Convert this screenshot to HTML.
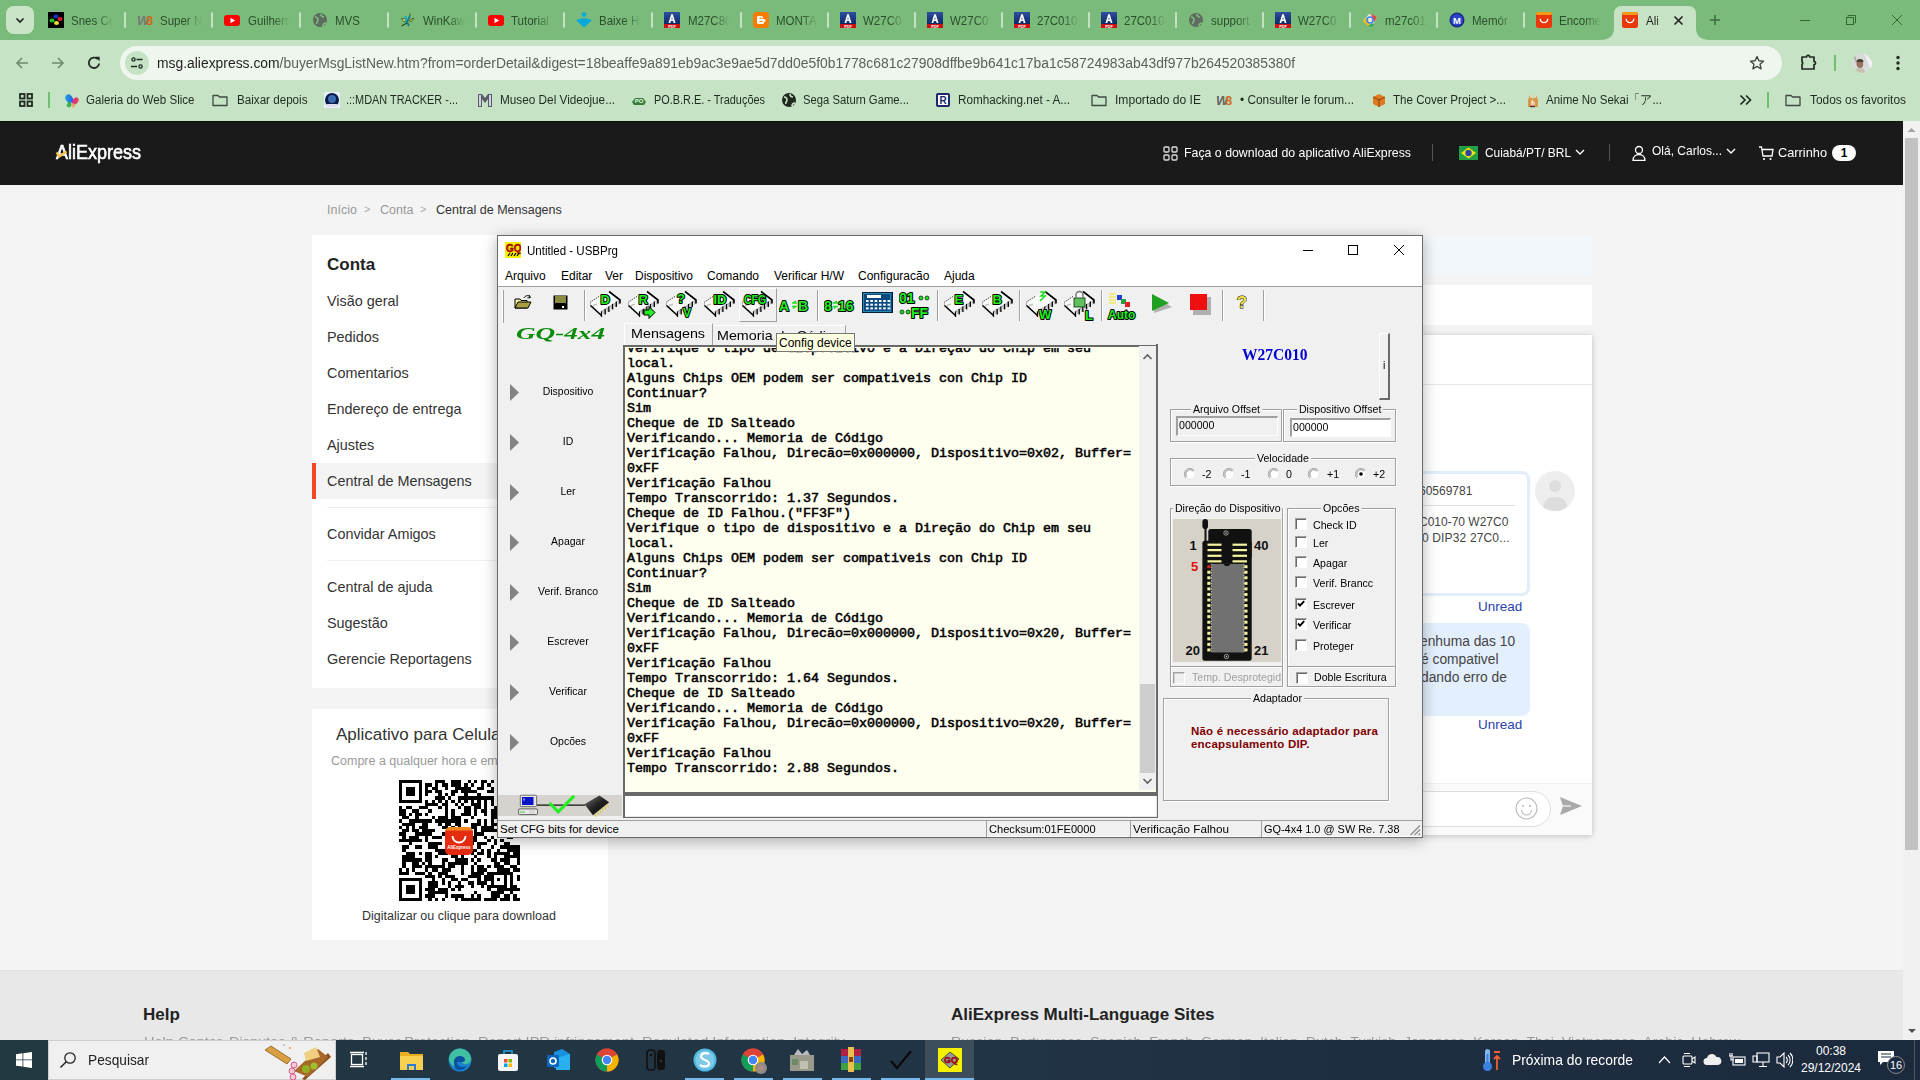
<!DOCTYPE html>
<html><head><meta charset="utf-8"><style>
*{margin:0;padding:0;box-sizing:border-box}
html,body{width:1920px;height:1080px;overflow:hidden;background:#f4f4f4;font-family:"Liberation Sans",sans-serif;position:relative}
.a{position:absolute}
.t{position:absolute;white-space:nowrap;line-height:1;transform-origin:0 0}
.tabt{font-size:12.5px;color:#2a4f2a;width:46px;overflow:hidden;-webkit-mask-image:linear-gradient(90deg,#000 60%,transparent 100%)}
.bmt{font-size:12.5px;color:#1f2a1f}
.hdt{font-size:13px;color:#fff}
.bc{font-size:12.5px}
.sbt{font-size:14.4px;color:#333}
.msg{font-size:12px;color:#444}
.menu{font-size:12px;color:#000}
.wt{font-size:11px;color:#000;transform:scaleX(0.965)}
.lb{font-size:11.5px;color:#000}
.tabw{font-size:13px;color:#000}
.log{font-family:"Liberation Mono",monospace;font-weight:normal;-webkit-text-stroke:0.55px #000;font-size:13.33px;color:#000;line-height:15px}
</style></head><body>
<div class="a" style="left:0;top:0;width:1920px;height:40px;background:#7abb7b"></div>
<div class="a" style="left:6px;top:6px;width:28px;height:28px;border-radius:8px;background:#c9e4c8"></div>
<svg class="a" style="left:14px;top:14px;width:12px;height:12px" viewBox="0 0 12 12"><path d="M2.5 4.5L6 8l3.5-3.5" stroke="#1f1f1f" stroke-width="1.6" fill="none"/></svg>
<svg class="a" style="left:47.5px;top:12px;width:16px;height:16px" viewBox="0 0 16 16"><rect width="16" height="16" fill="#000"/><ellipse cx="8" cy="4.5" rx="2.5" ry="2" fill="#2030c0"/><ellipse cx="12" cy="7" rx="2.5" ry="2" fill="#e02020"/><ellipse cx="4" cy="8.5" rx="2.5" ry="2" fill="#20c020"/><ellipse cx="8.5" cy="11" rx="2.5" ry="2" fill="#f0e020"/></svg>
<div class="t tabt" style="left:71px;top:14.5px;transform:scaleX(0.92)">Snes Ce</div>
<div class="a" style="left:124px;top:12px;width:2px;height:16px;background:#c2e2c0;border-radius:1px"></div>
<svg class="a" style="left:136.5px;top:12px;width:16px;height:16px" viewBox="0 0 16 16"><text x="0" y="13" font-family="Liberation Sans" font-weight="bold" font-style="italic" font-size="13" fill="#777">W</text><text x="9" y="13" font-family="Liberation Sans" font-weight="bold" font-size="13" fill="#c86a20">8</text></svg>
<div class="t tabt" style="left:160px;top:14.5px;transform:scaleX(0.92)">Super N</div>
<div class="a" style="left:211px;top:12px;width:2px;height:16px;background:#c2e2c0;border-radius:1px"></div>
<svg class="a" style="left:224.0px;top:12px;width:16px;height:16px" viewBox="0 0 16 16"><rect x="0" y="3" width="16" height="11" rx="3" fill="#f00"/><path d="M6.5 5.8v5.4l4.6-2.7z" fill="#fff"/></svg>
<div class="t tabt" style="left:248px;top:14.5px;transform:scaleX(0.92)">Guilherm</div>
<div class="a" style="left:299px;top:12px;width:2px;height:16px;background:#c2e2c0;border-radius:1px"></div>
<svg class="a" style="left:311.5px;top:12px;width:16px;height:16px" viewBox="0 0 16 16"><circle cx="8" cy="8" r="7" fill="#5f6b5f"/><path d="M3 5c2 0 3 1 3 3s-2 2-1 4M9 2c0 2 1 3 3 3M11 14c0-2 1-3 3-3" stroke="#7dbb7d" stroke-width="1.6" fill="none"/></svg>
<div class="t tabt" style="left:335px;top:14.5px;transform:scaleX(0.92)">MVS</div>
<div class="a" style="left:387px;top:12px;width:2px;height:16px;background:#c2e2c0;border-radius:1px"></div>
<svg class="a" style="left:399.5px;top:12px;width:16px;height:16px" viewBox="0 0 16 16"><path d="M1.5 6.5L7 7.5L4 10z" fill="#e8f080" stroke="#4a5a10" stroke-width="0.9"/><path d="M9 8.5L14 6L11 10z" fill="#e8f040" stroke="#4a5a10" stroke-width="0.9"/><path d="M5 4C6 6 7 10 6 12" stroke="#20a8c0" stroke-width="2.2" fill="none"/><path d="M10 4L7 10L9 14" stroke="#108090" stroke-width="1.8" fill="none"/><path d="M1.5 14L7 11" stroke="#3a4a10" stroke-width="1.4"/><path d="M10 1.5V4" stroke="#5a6a20" stroke-width="1.2"/></svg>
<div class="t tabt" style="left:423px;top:14.5px;transform:scaleX(0.92)">WinKaw</div>
<div class="a" style="left:475px;top:12px;width:2px;height:16px;background:#c2e2c0;border-radius:1px"></div>
<svg class="a" style="left:487.5px;top:12px;width:16px;height:16px" viewBox="0 0 16 16"><rect x="0" y="3" width="16" height="11" rx="3" fill="#f00"/><path d="M6.5 5.8v5.4l4.6-2.7z" fill="#fff"/></svg>
<div class="t tabt" style="left:511px;top:14.5px;transform:scaleX(0.92)">Tutorial</div>
<div class="a" style="left:563px;top:12px;width:2px;height:16px;background:#c2e2c0;border-radius:1px"></div>
<svg class="a" style="left:575.5px;top:12px;width:16px;height:16px" viewBox="0 0 16 16"><circle cx="8" cy="2.6" r="2.3" fill="#08a8d8"/><path d="M0.3 8.5Q2 6.3 4 7.3Q6 5.6 8 7Q10 5.6 12 7.3Q14 6.3 15.7 8.5L8 15.6z" fill="#08a8d8"/></svg>
<div class="t tabt" style="left:599px;top:14.5px;transform:scaleX(0.92)">Baixe H</div>
<div class="a" style="left:651px;top:12px;width:2px;height:16px;background:#c2e2c0;border-radius:1px"></div>
<svg class="a" style="left:664.0px;top:12px;width:16px;height:16px" viewBox="0 0 16 16"><defs><linearGradient id="pg" x1="0" y1="0" x2="0" y2="1"><stop offset="0" stop-color="#2f4f9f"/><stop offset="1" stop-color="#0e2a6a"/></linearGradient></defs><rect width="16" height="12" fill="url(#pg)"/><path d="M4.5 11L7.2 2.2h1.6L11.5 11h-1.8l-.6-2H6.9l-.6 2zM7.3 7.6h1.4L8 5z" fill="#fff"/><rect y="12" width="16" height="4" fill="#d01010"/><text x="8" y="15.6" text-anchor="middle" font-family="Liberation Sans" font-weight="bold" font-size="3.8" fill="#fff">PDF</text></svg>
<div class="t tabt" style="left:688px;top:14.5px;transform:scaleX(0.92)">M27C80</div>
<div class="a" style="left:740px;top:12px;width:2px;height:16px;background:#c2e2c0;border-radius:1px"></div>
<svg class="a" style="left:752.5px;top:12px;width:16px;height:16px" viewBox="0 0 16 16"><rect width="16" height="16" rx="3.5" fill="#f57d00"/><path d="M5 4h3.5a1.5 1.5 0 010 3H11a1.5 1.5 0 010 3v.5A1.5 1.5 0 019.5 12h-4A1.5 1.5 0 014 10.5v-5A1.5 1.5 0 015 4z" fill="#fff"/><path d="M6.5 6.2h2M6.5 9.5h3" stroke="#f57d00" stroke-width="1.2"/></svg>
<div class="t tabt" style="left:776px;top:14.5px;transform:scaleX(0.92)">MONTA</div>
<div class="a" style="left:827px;top:12px;width:2px;height:16px;background:#c2e2c0;border-radius:1px"></div>
<svg class="a" style="left:839.5px;top:12px;width:16px;height:16px" viewBox="0 0 16 16"><defs><linearGradient id="pg" x1="0" y1="0" x2="0" y2="1"><stop offset="0" stop-color="#2f4f9f"/><stop offset="1" stop-color="#0e2a6a"/></linearGradient></defs><rect width="16" height="12" fill="url(#pg)"/><path d="M4.5 11L7.2 2.2h1.6L11.5 11h-1.8l-.6-2H6.9l-.6 2zM7.3 7.6h1.4L8 5z" fill="#fff"/><rect y="12" width="16" height="4" fill="#d01010"/><text x="8" y="15.6" text-anchor="middle" font-family="Liberation Sans" font-weight="bold" font-size="3.8" fill="#fff">PDF</text></svg>
<div class="t tabt" style="left:863px;top:14.5px;transform:scaleX(0.92)">W27C0</div>
<div class="a" style="left:914px;top:12px;width:2px;height:16px;background:#c2e2c0;border-radius:1px"></div>
<svg class="a" style="left:926.5px;top:12px;width:16px;height:16px" viewBox="0 0 16 16"><defs><linearGradient id="pg" x1="0" y1="0" x2="0" y2="1"><stop offset="0" stop-color="#2f4f9f"/><stop offset="1" stop-color="#0e2a6a"/></linearGradient></defs><rect width="16" height="12" fill="url(#pg)"/><path d="M4.5 11L7.2 2.2h1.6L11.5 11h-1.8l-.6-2H6.9l-.6 2zM7.3 7.6h1.4L8 5z" fill="#fff"/><rect y="12" width="16" height="4" fill="#d01010"/><text x="8" y="15.6" text-anchor="middle" font-family="Liberation Sans" font-weight="bold" font-size="3.8" fill="#fff">PDF</text></svg>
<div class="t tabt" style="left:950px;top:14.5px;transform:scaleX(0.92)">W27C0</div>
<div class="a" style="left:1001px;top:12px;width:2px;height:16px;background:#c2e2c0;border-radius:1px"></div>
<svg class="a" style="left:1013.5px;top:12px;width:16px;height:16px" viewBox="0 0 16 16"><defs><linearGradient id="pg" x1="0" y1="0" x2="0" y2="1"><stop offset="0" stop-color="#2f4f9f"/><stop offset="1" stop-color="#0e2a6a"/></linearGradient></defs><rect width="16" height="12" fill="url(#pg)"/><path d="M4.5 11L7.2 2.2h1.6L11.5 11h-1.8l-.6-2H6.9l-.6 2zM7.3 7.6h1.4L8 5z" fill="#fff"/><rect y="12" width="16" height="4" fill="#d01010"/><text x="8" y="15.6" text-anchor="middle" font-family="Liberation Sans" font-weight="bold" font-size="3.8" fill="#fff">PDF</text></svg>
<div class="t tabt" style="left:1037px;top:14.5px;transform:scaleX(0.92)">27C010</div>
<div class="a" style="left:1088px;top:12px;width:2px;height:16px;background:#c2e2c0;border-radius:1px"></div>
<svg class="a" style="left:1100.5px;top:12px;width:16px;height:16px" viewBox="0 0 16 16"><defs><linearGradient id="pg" x1="0" y1="0" x2="0" y2="1"><stop offset="0" stop-color="#2f4f9f"/><stop offset="1" stop-color="#0e2a6a"/></linearGradient></defs><rect width="16" height="12" fill="url(#pg)"/><path d="M4.5 11L7.2 2.2h1.6L11.5 11h-1.8l-.6-2H6.9l-.6 2zM7.3 7.6h1.4L8 5z" fill="#fff"/><rect y="12" width="16" height="4" fill="#d01010"/><text x="8" y="15.6" text-anchor="middle" font-family="Liberation Sans" font-weight="bold" font-size="3.8" fill="#fff">PDF</text></svg>
<div class="t tabt" style="left:1124px;top:14.5px;transform:scaleX(0.92)">27C010</div>
<div class="a" style="left:1175px;top:12px;width:2px;height:16px;background:#c2e2c0;border-radius:1px"></div>
<svg class="a" style="left:1187.5px;top:12px;width:16px;height:16px" viewBox="0 0 16 16"><circle cx="8" cy="8" r="7" fill="#5f6b5f"/><path d="M3 5c2 0 3 1 3 3s-2 2-1 4M9 2c0 2 1 3 3 3M11 14c0-2 1-3 3-3" stroke="#7dbb7d" stroke-width="1.6" fill="none"/></svg>
<div class="t tabt" style="left:1211px;top:14.5px;transform:scaleX(0.92)">support</div>
<div class="a" style="left:1262px;top:12px;width:2px;height:16px;background:#c2e2c0;border-radius:1px"></div>
<svg class="a" style="left:1274.5px;top:12px;width:16px;height:16px" viewBox="0 0 16 16"><defs><linearGradient id="pg" x1="0" y1="0" x2="0" y2="1"><stop offset="0" stop-color="#2f4f9f"/><stop offset="1" stop-color="#0e2a6a"/></linearGradient></defs><rect width="16" height="12" fill="url(#pg)"/><path d="M4.5 11L7.2 2.2h1.6L11.5 11h-1.8l-.6-2H6.9l-.6 2zM7.3 7.6h1.4L8 5z" fill="#fff"/><rect y="12" width="16" height="4" fill="#d01010"/><text x="8" y="15.6" text-anchor="middle" font-family="Liberation Sans" font-weight="bold" font-size="3.8" fill="#fff">PDF</text></svg>
<div class="t tabt" style="left:1298px;top:14.5px;transform:scaleX(0.92)">W27C0</div>
<div class="a" style="left:1349px;top:12px;width:2px;height:16px;background:#c2e2c0;border-radius:1px"></div>
<svg class="a" style="left:1361.5px;top:12px;width:16px;height:16px" viewBox="0 0 16 16"><path d="M1 9l6-7 8 3-6 10z" fill="#e8e8e8"/><path d="M9 2l6 3-3 5z" fill="#ea4335"/><path d="M1 9l4-4 3 7-2 2z" fill="#fbbc05"/><path d="M6 14l4-3 2 2-3 2z" fill="#34a853"/><circle cx="8" cy="8" r="3" fill="none" stroke="#4285f4" stroke-width="1.6"/></svg>
<div class="t tabt" style="left:1385px;top:14.5px;transform:scaleX(0.92)">m27c01</div>
<div class="a" style="left:1436px;top:12px;width:2px;height:16px;background:#c2e2c0;border-radius:1px"></div>
<svg class="a" style="left:1448.5px;top:12px;width:16px;height:16px" viewBox="0 0 16 16"><circle cx="8" cy="8" r="7.5" fill="#1a2a8a"/><circle cx="8" cy="8" r="6" fill="#2a45c8"/><text x="8" y="11.6" text-anchor="middle" font-family="Liberation Sans" font-weight="bold" font-size="9.5" fill="#fff">M</text></svg>
<div class="t tabt" style="left:1472px;top:14.5px;transform:scaleX(0.92)">Memór</div>
<div class="a" style="left:1523px;top:12px;width:2px;height:16px;background:#c2e2c0;border-radius:1px"></div>
<svg class="a" style="left:1535.5px;top:12px;width:16px;height:16px" viewBox="0 0 16 16"><rect width="16" height="16" rx="2.5" fill="#e8380c"/><rect width="16" height="3" rx="1.5" fill="#f79a1a"/><path d="M4.2 6.8a3.8 3.8 0 007.6 0" stroke="#fff" stroke-width="1.4" fill="none"/></svg>
<div class="t tabt" style="left:1559px;top:14.5px;transform:scaleX(0.92)">Encome</div>
<svg class="a" style="left:1600px;top:6px;width:110px;height:36px" viewBox="0 0 110 36"><path d="M0 34 Q14 34 14 22 V8 Q14 0 22 0 H88 Q96 0 96 8 V22 Q96 34 110 34 V36 H0z" fill="#c6e3c6"/></svg>
<svg class="a" style="left:1622px;top:12px;width:16px;height:16px" viewBox="0 0 16 16"><rect width="16" height="16" rx="2.5" fill="#e8380c"/><rect width="16" height="3" rx="1.5" fill="#f79a1a"/><path d="M4.2 6.8a3.8 3.8 0 007.6 0" stroke="#fff" stroke-width="1.4" fill="none"/></svg>
<div class="t tabt" style="left:1646px;top:14.5px;color:#1f1f1f;width:19px;transform:scaleX(0.92)">Ali</div>
<svg class="a" style="left:1673px;top:15px;width:11px;height:11px" viewBox="0 0 11 11"><path d="M1.5 1.5l8 8M9.5 1.5l-8 8" stroke="#1f1f1f" stroke-width="1.6"/></svg>
<svg class="a" style="left:1709px;top:14px;width:12px;height:12px" viewBox="0 0 12 12"><path d="M6 1v10M1 6h10" stroke="#3d6b3d" stroke-width="1.5"/></svg>
<div class="a" style="left:1800px;top:20px;width:10px;height:1px;background:#2f6a2f"></div>
<svg class="a" style="left:1845px;top:14px;width:12px;height:12px" viewBox="0 0 12 12"><path d="M3 2.5V1.5h7.5V9H9.5" stroke="#2f6a2f" fill="none"/><rect x="1.5" y="3.5" width="7" height="7" stroke="#2f6a2f" fill="none"/></svg>
<svg class="a" style="left:1891px;top:14px;width:12px;height:12px" viewBox="0 0 12 12"><path d="M1 1l10 10M11 1L1 11" stroke="#2f6a2f" stroke-width="1"/></svg>
<div class="a" style="left:0;top:40px;width:1920px;height:81px;background:#c6e3c6"></div>
<svg class="a" style="left:14px;top:55px;width:16px;height:16px" viewBox="0 0 16 16"><path d="M14 8H3M8 3L3 8l5 5" stroke="#6f8a6f" stroke-width="1.6" fill="none"/></svg>
<svg class="a" style="left:50px;top:55px;width:16px;height:16px" viewBox="0 0 16 16"><path d="M2 8h11M8 3l5 5-5 5" stroke="#6f8a6f" stroke-width="1.6" fill="none"/></svg>
<svg class="a" style="left:86px;top:55px;width:16px;height:16px" viewBox="0 0 16 16"><path d="M13.2 8.5A5.2 5.2 0 1 1 11.8 4.2" stroke="#1f2a1f" stroke-width="1.8" fill="none"/><path d="M9.2 1.8h4.4v4.4z" fill="#1f2a1f"/></svg>
<div class="a" style="left:120px;top:46px;width:1662px;height:34px;border-radius:17px;background:#eff6ee"></div>
<div class="a" style="left:125px;top:51px;width:24px;height:24px;border-radius:12px;background:#c6e3c6"></div>
<svg class="a" style="left:130px;top:56px;width:14px;height:14px" viewBox="0 0 14 14"><circle cx="3.5" cy="3.5" r="1.6" stroke="#1f2a1f" stroke-width="1.3" fill="none"/><path d="M6.5 3.5h6M1 10.5h6" stroke="#1f2a1f" stroke-width="1.3"/><circle cx="10.5" cy="10.5" r="1.6" stroke="#1f2a1f" stroke-width="1.3" fill="none"/></svg>
<div class="t" id="url" style="left:157px;top:56px;font-size:14px;color:#1f1f1f;--tw:1138;transform:scaleX(0.9910)">msg.aliexpress.com<span style="color:#5a625a">/buyerMsgListNew.htm?from=orderDetail&amp;digest=18beaffe9a891eb9ac3e9ae5d7dd0e5f0b1778c681c27908dffbe9b641c17ba1c58724983ab43df977b264520385380f</span></div>
<svg class="a" style="left:1749px;top:55px;width:16px;height:16px" viewBox="0 0 16 16"><path d="M8 1.5l1.9 4.3 4.6.4-3.5 3 1.1 4.6L8 11.4l-4.1 2.4 1.1-4.6-3.5-3 4.6-.4z" stroke="#3f4a3f" stroke-width="1.4" fill="none" stroke-linejoin="round"/></svg>
<svg class="a" style="left:1799px;top:53px;width:20px;height:19px" viewBox="0 0 20 19"><path d="M3 4H7.5A1.6 1.6 0 0 1 10.7 4H15V8.5A1.6 1.6 0 0 1 15 11.7V16H3V11.5A2 2 0 0 0 3 8.5Z" stroke="#1f2a1f" stroke-width="1.7" fill="none" stroke-linejoin="round"/></svg>
<div class="a" style="left:1834px;top:55px;width:2px;height:16px;background:#6fbf6f"></div>
<svg class="a" style="left:1852px;top:53px;width:20px;height:20px" viewBox="0 0 20 20"><defs><clipPath id="avc"><circle cx="10" cy="10" r="10"/></clipPath></defs><g clip-path="url(#avc)"><rect width="20" height="20" fill="#d8dcd8"/><path d="M12 0L20 8V20L14 4z" fill="#f4f4f4"/><path d="M2 2L6 14" stroke="#aaa" stroke-width="1.5"/><ellipse cx="8" cy="11" rx="3.2" ry="4" fill="#9a7060"/><path d="M4.5 9a3.5 3 0 0 1 7 0" fill="#4a3a30"/><path d="M3 20c0-4 2-5 5-5s5 1 5 5z" fill="#c8c0b0"/></g></svg>
<svg class="a" style="left:1891px;top:54px;width:14px;height:18px" viewBox="0 0 14 18"><circle cx="7" cy="3.5" r="1.7" fill="#1f2a1f"/><circle cx="7" cy="9" r="1.7" fill="#1f2a1f"/><circle cx="7" cy="14.5" r="1.7" fill="#1f2a1f"/></svg>
<svg class="a" style="left:19px;top:93px;width:14px;height:14px" viewBox="0 0 14 14"><g stroke="#1f2a1f" stroke-width="1.8" fill="none"><rect x="1" y="1" width="4.5" height="4.5"/><rect x="8.5" y="1" width="4.5" height="4.5"/><rect x="1" y="8.5" width="4.5" height="4.5"/><rect x="8.5" y="8.5" width="4.5" height="4.5"/></g></svg>
<div class="a" style="left:48px;top:92px;width:2px;height:16px;background:#6fbf6f"></div>
<svg class="a" style="left:63px;top:92px;width:18px;height:18px" viewBox="0 0 24 24"><defs><linearGradient id="bf1" x1="0" y1="0" x2="1" y2="1"><stop offset="0" stop-color="#20b0e8"/><stop offset="1" stop-color="#2a50d8"/></linearGradient><linearGradient id="bf2" x1="1" y1="0" x2="0" y2="1"><stop offset="0" stop-color="#f05040"/><stop offset="1" stop-color="#d020b0"/></linearGradient></defs><ellipse cx="8.2" cy="9" rx="4.6" ry="6" transform="rotate(-35 8.2 9)" fill="url(#bf1)"/><ellipse cx="16.5" cy="12" rx="3.6" ry="5.2" transform="rotate(40 16.5 12)" fill="url(#bf2)"/><ellipse cx="8.2" cy="17" rx="3" ry="3.6" transform="rotate(30 8.2 17)" fill="#40b050"/><ellipse cx="14" cy="18" rx="2" ry="3" fill="#f0a060"/></svg>
<div class="t bmt" style="left:86px;top:94px;--tw:108.5;transform:scaleX(0.9259)">Galeria do Web Slice</div>
<svg class="a" style="left:212px;top:92px;width:16px;height:16px" viewBox="0 0 16 16"><path d="M1 3.5h5l1.5 1.5H15v8.5H1z" stroke="#3f4a3f" stroke-width="1.3" fill="none" stroke-linejoin="round"/></svg>
<div class="t bmt" style="left:237px;top:94px;--tw:70.5;transform:scaleX(0.9307)">Baixar depois</div>
<svg class="a" style="left:324px;top:92px;width:16px;height:16px" viewBox="0 0 16 16"><rect width="16" height="16" fill="#e8eef8"/><circle cx="8" cy="8" r="7" fill="#0a1a4a"/><circle cx="8" cy="7" r="4" fill="#3a6ab0"/><rect x="3" y="12" width="10" height="3" fill="#dde"/></svg>
<div class="t bmt" style="left:346px;top:94px;--tw:112;transform:scaleX(0.8732)">.::MDAN TRACKER -...</div>
<svg class="a" style="left:477px;top:92px;width:16px;height:16px" viewBox="0 0 16 16"><path d="M1 2h4l3 4 3-4h4v13h-4V7l-3 4-3-4v8H1z" fill="#5a5a6a"/><path d="M2 3h2v11H2zM12 3h2v11h-2z" fill="#cfd5e0"/></svg>
<div class="t bmt" style="left:500px;top:94px;--tw:115;transform:scaleX(0.9420)">Museo Del Videojue...</div>
<svg class="a" style="left:631px;top:92px;width:16px;height:16px" viewBox="0 0 16 16"><path d="M1 10l3-4h8l3 4-2 3H3z" fill="#3a7a3a"/><text x="8" y="11" text-anchor="middle" font-family="Liberation Sans" font-weight="bold" font-size="6" fill="#dfd">PO</text></svg>
<div class="t bmt" style="left:654px;top:94px;--tw:111;transform:scaleX(0.8730)">PO.B.R.E. - Traduções</div>
<svg class="a" style="left:781px;top:92px;width:16px;height:16px" viewBox="0 0 16 16"><circle cx="8" cy="8" r="7" fill="#1f2a1f"/><path d="M3 5c2 0 3 1 3 3s-2 2-1 4M9 2c0 2 1 3 3 3M11 14c0-2 1-3 3-3" stroke="#c6e3c6" stroke-width="1.6" fill="none"/></svg>
<div class="t bmt" style="left:803px;top:94px;--tw:106;transform:scaleX(0.9026)">Sega Saturn Game...</div>
<svg class="a" style="left:935px;top:92px;width:16px;height:16px" viewBox="0 0 16 16"><rect x="1" y="1" width="14" height="14" rx="2" fill="#1a2a6a"/><rect x="3" y="3" width="10" height="10" fill="#fff"/><text x="8" y="12" text-anchor="middle" font-family="Liberation Sans" font-weight="bold" font-size="10" fill="#1a2a6a">R</text></svg>
<div class="t bmt" style="left:958px;top:94px;--tw:112;transform:scaleX(0.9371)">Romhacking.net - A...</div>
<svg class="a" style="left:1091px;top:92px;width:16px;height:16px" viewBox="0 0 16 16"><path d="M1 3.5h5l1.5 1.5H15v8.5H1z" stroke="#3f4a3f" stroke-width="1.3" fill="none" stroke-linejoin="round"/></svg>
<div class="t bmt" style="left:1115px;top:94px;--tw:86;transform:scaleX(0.9668)">Importado do IE</div>
<svg class="a" style="left:1216px;top:92px;width:16px;height:16px" viewBox="0 0 16 16"><text x="0" y="13" font-family="Liberation Sans" font-weight="bold" font-style="italic" font-size="13" fill="#666">W</text><text x="9" y="13" font-family="Liberation Sans" font-weight="bold" font-size="13" fill="#d07020">8</text></svg>
<div class="t bmt" style="left:1240px;top:94px;--tw:114;transform:scaleX(0.9468)">• Consulter le forum...</div>
<svg class="a" style="left:1371px;top:92px;width:16px;height:16px" viewBox="0 0 16 16"><path d="M2 5l6-3 6 3v7l-6 3-6-3z" fill="#e07a20"/><path d="M2 5l6 3 6-3M8 8v7" stroke="#8a4010" fill="none"/></svg>
<div class="t bmt" style="left:1393px;top:94px;--tw:113;transform:scaleX(0.9267)">The Cover Project &gt;...</div>
<svg class="a" style="left:1525px;top:92px;width:16px;height:16px" viewBox="0 0 16 16"><path d="M3 15V8L5 2.5L7 6.5H9L11 2.5L13 8V15z" fill="#d89848"/><path d="M5 3l1 3M11 3l-1 3" stroke="#f0e0c0" stroke-width="1"/><path d="M6 9.5h4v4H6z" fill="#f4c8b0"/><path d="M7.2 8v3" stroke="#fff" stroke-width="1"/><path d="M5 14.5h5" stroke="#503040" stroke-width="1.4"/></svg>
<div class="t bmt" style="left:1546px;top:94px;--tw:116;transform:scaleX(0.9203)">Anime No Sekai「ア...</div>
<svg class="a" style="left:1739px;top:94px;width:13px;height:12px" viewBox="0 0 13 12"><path d="M1.5 1.5L6 6l-4.5 4.5M7 1.5L11.5 6 7 10.5" stroke="#1f2a1f" stroke-width="1.7" fill="none"/></svg>
<div class="a" style="left:1767px;top:92px;width:2px;height:16px;background:#6fbf6f"></div>
<svg class="a" style="left:1785px;top:92px;width:16px;height:16px" viewBox="0 0 16 16"><path d="M1 3.5h5l1.5 1.5H15v8.5H1z" stroke="#3f4a3f" stroke-width="1.3" fill="none" stroke-linejoin="round"/></svg>
<div class="t bmt" style="left:1810px;top:94px;--tw:96;transform:scaleX(0.9529)">Todos os favoritos</div>
<div class="a" style="left:0;top:121px;width:1903px;height:64px;background:#1a1a1a"></div>
<div class="a" style="left:0;top:121px;width:1903px;height:1px;background:#0d160d"></div>
<div class="t" style="left:56px;top:143px;font-size:19.5px;color:#fff;--tw:85;transform:scaleX(0.9227);-webkit-text-stroke:0.6px #fff">AliExpress</div>
<svg class="a" style="left:55px;top:150px;width:13px;height:9px" viewBox="0 0 13 9"><path d="M1.5 2.5L4.5 6.5L11.5 1.5" stroke="#f7c040" stroke-width="2.2" fill="none"/></svg>
<svg class="a" style="left:1163px;top:146px;width:15px;height:15px" viewBox="0 0 15 15"><g stroke="#ddd" stroke-width="1.3" fill="none"><rect x="1" y="1" width="5" height="5" rx="1"/><rect x="9" y="1" width="5" height="5" rx="1"/><rect x="1" y="9" width="5" height="5" rx="1"/><rect x="9" y="9" width="5" height="5" rx="1"/></g></svg>
<div class="t hdt" style="left:1184px;top:146px;--tw:227;transform:scaleX(0.9490)">Faça o download do aplicativo AliExpress</div>
<div class="a" style="left:1432px;top:144px;width:1px;height:17px;background:#555"></div>
<svg class="a" style="left:1459px;top:146px;width:19px;height:14px" viewBox="0 0 19 14"><rect width="19" height="14" fill="#229e45"/><path d="M9.5 1.5L17 7l-7.5 5.5L2 7z" fill="#f8e509"/><circle cx="9.5" cy="7" r="3.2" fill="#2b49a3"/></svg>
<div class="t hdt" style="left:1485px;top:146px;--tw:86;transform:scaleX(0.9155)">Cuiabá/PT/ BRL</div>
<svg class="a" style="left:1575px;top:149px;width:10px;height:7px" viewBox="0 0 10 7"><path d="M1 1l4 4 4-4" stroke="#fff" stroke-width="1.4" fill="none"/></svg>
<div class="a" style="left:1609px;top:144px;width:1px;height:17px;background:#555"></div>
<svg class="a" style="left:1632px;top:145px;width:14px;height:16px" viewBox="0 0 14 16"><circle cx="7" cy="5" r="3.5" stroke="#fff" stroke-width="1.3" fill="none"/><path d="M1 15.5c0-4 3-6 6-6s6 2 6 6z" stroke="#fff" stroke-width="1.3" fill="none"/></svg>
<div class="t hdt" style="left:1652px;top:144px;--tw:70;transform:scaleX(0.9228)">Olá, Carlos...</div>
<svg class="a" style="left:1726px;top:148px;width:10px;height:7px" viewBox="0 0 10 7"><path d="M1 1l4 4 4-4" stroke="#fff" stroke-width="1.4" fill="none"/></svg>
<svg class="a" style="left:1758px;top:145px;width:16px;height:16px" viewBox="0 0 16 16"><path d="M1 2h2.5l1.5 9h9l1-6.5H4" stroke="#fff" stroke-width="1.3" fill="none"/><circle cx="6" cy="14" r="1.1" fill="#fff"/><circle cx="12.5" cy="14" r="1.1" fill="#fff"/></svg>
<div class="t hdt" style="left:1778px;top:146px;--tw:49;transform:scaleX(0.9828)">Carrinho</div>
<div class="a" style="left:1832px;top:145px;width:24px;height:16px;border-radius:8px;background:#fff;color:#000;font-size:12px;font-weight:bold;text-align:center;line-height:16px">1</div>
<div class="a" style="left:1903px;top:121px;width:17px;height:919px;background:#f1f1f1"></div>
<div class="a" style="left:1905px;top:138px;width:13px;height:712px;background:#c1c1c1"></div>
<svg class="a" style="left:1906px;top:125px;width:11px;height:9px" viewBox="0 0 11 9"><path d="M1.5 7l4-4 4 4z" fill="#a3a3a3"/></svg>
<svg class="a" style="left:1906px;top:1026px;width:12px;height:10px" viewBox="0 0 12 10"><path d="M2 3l4 4 4-4z" fill="#505050"/></svg>
<div class="t bc" style="left:327px;top:204px;color:#999">Início</div>
<div class="t bc" style="left:364px;top:203px;color:#aaa;font-size:11px;top:204px">&gt;</div>
<div class="t bc" style="left:380px;top:204px;color:#999">Conta</div>
<div class="t bc" style="left:420px;top:204px;color:#aaa;font-size:11px">&gt;</div>
<div class="t bc" style="left:436px;top:204px;color:#333">Central de Mensagens</div>
<div class="a" style="left:312px;top:235px;width:296px;height:453px;background:#fff"></div>
<div class="t" style="left:327px;top:256px;font-size:17px;font-weight:bold;color:#222">Conta</div>
<div class="a" style="left:312px;top:463px;width:296px;height:36px;background:#f4f4f4"></div>
<div class="a" style="left:312px;top:463px;width:4px;height:36px;background:#f24a28"></div>
<div class="a" style="left:327px;top:507px;width:281px;height:1px;background:#eee"></div>
<div class="a" style="left:327px;top:560px;width:281px;height:1px;background:#eee"></div>
<div class="t sbt" style="left:327px;top:294px">Visão geral</div>
<div class="t sbt" style="left:327px;top:330px">Pedidos</div>
<div class="t sbt" style="left:327px;top:366px">Comentarios</div>
<div class="t sbt" style="left:327px;top:402px">Endereço de entrega</div>
<div class="t sbt" style="left:327px;top:438px">Ajustes</div>
<div class="t sbt" style="left:327px;top:474px">Central de Mensagens</div>
<div class="t sbt" style="left:327px;top:527px">Convidar Amigos</div>
<div class="t sbt" style="left:327px;top:580px">Central de ajuda</div>
<div class="t sbt" style="left:327px;top:616px">Sugestão</div>
<div class="t sbt" style="left:327px;top:652px">Gerencie Reportagens</div>
<div class="a" style="left:312px;top:709px;width:296px;height:231px;background:#fff"></div>
<div class="t" style="left:336px;top:726px;font-size:17px;color:#333">Aplicativo para Celular</div>
<div class="t" style="left:331px;top:755px;font-size:12.5px;color:#999">Compre a qualquer hora e em qualquer lugar</div>
<svg class="a" style="left:399px;top:780px;width:121px;height:121px" viewBox="0 0 37 37" shape-rendering="crispEdges"><g fill="#000"><rect x="0" y="0" width="7" height="1"/><rect x="11" y="0" width="3" height="1"/><rect x="16" y="0" width="3" height="1"/><rect x="21" y="0" width="1" height="1"/><rect x="23" y="0" width="1" height="1"/><rect x="25" y="0" width="2" height="1"/><rect x="28" y="0" width="1" height="1"/><rect x="30" y="0" width="7" height="1"/><rect x="0" y="1" width="1" height="1"/><rect x="6" y="1" width="1" height="1"/><rect x="8" y="1" width="2" height="1"/><rect x="11" y="1" width="1" height="1"/><rect x="13" y="1" width="2" height="1"/><rect x="16" y="1" width="3" height="1"/><rect x="20" y="1" width="1" height="1"/><rect x="22" y="1" width="1" height="1"/><rect x="25" y="1" width="1" height="1"/><rect x="27" y="1" width="1" height="1"/><rect x="30" y="1" width="1" height="1"/><rect x="36" y="1" width="1" height="1"/><rect x="0" y="2" width="1" height="1"/><rect x="2" y="2" width="3" height="1"/><rect x="6" y="2" width="1" height="1"/><rect x="8" y="2" width="1" height="1"/><rect x="10" y="2" width="2" height="1"/><rect x="14" y="2" width="1" height="1"/><rect x="17" y="2" width="5" height="1"/><rect x="24" y="2" width="2" height="1"/><rect x="28" y="2" width="1" height="1"/><rect x="30" y="2" width="1" height="1"/><rect x="32" y="2" width="3" height="1"/><rect x="36" y="2" width="1" height="1"/><rect x="0" y="3" width="1" height="1"/><rect x="2" y="3" width="3" height="1"/><rect x="6" y="3" width="1" height="1"/><rect x="8" y="3" width="2" height="1"/><rect x="11" y="3" width="2" height="1"/><rect x="16" y="3" width="2" height="1"/><rect x="19" y="3" width="5" height="1"/><rect x="27" y="3" width="2" height="1"/><rect x="30" y="3" width="1" height="1"/><rect x="32" y="3" width="3" height="1"/><rect x="36" y="3" width="1" height="1"/><rect x="0" y="4" width="1" height="1"/><rect x="2" y="4" width="3" height="1"/><rect x="6" y="4" width="1" height="1"/><rect x="8" y="4" width="1" height="1"/><rect x="12" y="4" width="1" height="1"/><rect x="14" y="4" width="1" height="1"/><rect x="16" y="4" width="1" height="1"/><rect x="20" y="4" width="1" height="1"/><rect x="24" y="4" width="1" height="1"/><rect x="30" y="4" width="1" height="1"/><rect x="32" y="4" width="3" height="1"/><rect x="36" y="4" width="1" height="1"/><rect x="0" y="5" width="1" height="1"/><rect x="6" y="5" width="1" height="1"/><rect x="11" y="5" width="3" height="1"/><rect x="15" y="5" width="1" height="1"/><rect x="18" y="5" width="11" height="1"/><rect x="30" y="5" width="1" height="1"/><rect x="36" y="5" width="1" height="1"/><rect x="0" y="6" width="7" height="1"/><rect x="8" y="6" width="1" height="1"/><rect x="10" y="6" width="1" height="1"/><rect x="12" y="6" width="1" height="1"/><rect x="14" y="6" width="1" height="1"/><rect x="16" y="6" width="1" height="1"/><rect x="18" y="6" width="1" height="1"/><rect x="20" y="6" width="1" height="1"/><rect x="22" y="6" width="1" height="1"/><rect x="24" y="6" width="1" height="1"/><rect x="26" y="6" width="1" height="1"/><rect x="28" y="6" width="1" height="1"/><rect x="30" y="6" width="7" height="1"/><rect x="8" y="7" width="4" height="1"/><rect x="13" y="7" width="2" height="1"/><rect x="17" y="7" width="1" height="1"/><rect x="19" y="7" width="1" height="1"/><rect x="22" y="7" width="3" height="1"/><rect x="26" y="7" width="1" height="1"/><rect x="28" y="7" width="1" height="1"/><rect x="0" y="8" width="1" height="1"/><rect x="2" y="8" width="2" height="1"/><rect x="6" y="8" width="3" height="1"/><rect x="12" y="8" width="1" height="1"/><rect x="14" y="8" width="1" height="1"/><rect x="18" y="8" width="1" height="1"/><rect x="20" y="8" width="2" height="1"/><rect x="23" y="8" width="2" height="1"/><rect x="26" y="8" width="1" height="1"/><rect x="29" y="8" width="2" height="1"/><rect x="33" y="8" width="2" height="1"/><rect x="36" y="8" width="1" height="1"/><rect x="0" y="9" width="2" height="1"/><rect x="4" y="9" width="2" height="1"/><rect x="9" y="9" width="1" height="1"/><rect x="14" y="9" width="1" height="1"/><rect x="16" y="9" width="1" height="1"/><rect x="20" y="9" width="2" height="1"/><rect x="23" y="9" width="1" height="1"/><rect x="25" y="9" width="2" height="1"/><rect x="28" y="9" width="5" height="1"/><rect x="36" y="9" width="1" height="1"/><rect x="0" y="10" width="2" height="1"/><rect x="3" y="10" width="1" height="1"/><rect x="5" y="10" width="2" height="1"/><rect x="8" y="10" width="1" height="1"/><rect x="14" y="10" width="1" height="1"/><rect x="16" y="10" width="1" height="1"/><rect x="19" y="10" width="3" height="1"/><rect x="23" y="10" width="1" height="1"/><rect x="26" y="10" width="1" height="1"/><rect x="28" y="10" width="2" height="1"/><rect x="31" y="10" width="1" height="1"/><rect x="33" y="10" width="2" height="1"/><rect x="36" y="10" width="1" height="1"/><rect x="1" y="11" width="2" height="1"/><rect x="5" y="11" width="1" height="1"/><rect x="10" y="11" width="1" height="1"/><rect x="12" y="11" width="3" height="1"/><rect x="16" y="11" width="3" height="1"/><rect x="22" y="11" width="1" height="1"/><rect x="28" y="11" width="5" height="1"/><rect x="34" y="11" width="1" height="1"/><rect x="36" y="11" width="1" height="1"/><rect x="0" y="12" width="1" height="1"/><rect x="3" y="12" width="7" height="1"/><rect x="11" y="12" width="8" height="1"/><rect x="20" y="12" width="1" height="1"/><rect x="24" y="12" width="1" height="1"/><rect x="26" y="12" width="1" height="1"/><rect x="28" y="12" width="1" height="1"/><rect x="31" y="12" width="6" height="1"/><rect x="1" y="13" width="4" height="1"/><rect x="7" y="13" width="2" height="1"/><rect x="12" y="13" width="1" height="1"/><rect x="14" y="13" width="2" height="1"/><rect x="17" y="13" width="2" height="1"/><rect x="22" y="13" width="3" height="1"/><rect x="26" y="13" width="1" height="1"/><rect x="28" y="13" width="9" height="1"/><rect x="0" y="14" width="1" height="1"/><rect x="2" y="14" width="1" height="1"/><rect x="4" y="14" width="1" height="1"/><rect x="6" y="14" width="3" height="1"/><rect x="13" y="14" width="2" height="1"/><rect x="16" y="14" width="1" height="1"/><rect x="18" y="14" width="1" height="1"/><rect x="22" y="14" width="2" height="1"/><rect x="25" y="14" width="4" height="1"/><rect x="31" y="14" width="6" height="1"/><rect x="1" y="15" width="2" height="1"/><rect x="4" y="15" width="2" height="1"/><rect x="7" y="15" width="4" height="1"/><rect x="17" y="15" width="1" height="1"/><rect x="23" y="15" width="1" height="1"/><rect x="25" y="15" width="5" height="1"/><rect x="31" y="15" width="2" height="1"/><rect x="35" y="15" width="2" height="1"/><rect x="0" y="16" width="2" height="1"/><rect x="5" y="16" width="5" height="1"/><rect x="13" y="16" width="1" height="1"/><rect x="15" y="16" width="1" height="1"/><rect x="17" y="16" width="1" height="1"/><rect x="20" y="16" width="2" height="1"/><rect x="23" y="16" width="3" height="1"/><rect x="31" y="16" width="1" height="1"/><rect x="33" y="16" width="2" height="1"/><rect x="36" y="16" width="1" height="1"/><rect x="1" y="17" width="1" height="1"/><rect x="3" y="17" width="3" height="1"/><rect x="8" y="17" width="1" height="1"/><rect x="10" y="17" width="3" height="1"/><rect x="17" y="17" width="2" height="1"/><rect x="20" y="17" width="4" height="1"/><rect x="26" y="17" width="1" height="1"/><rect x="28" y="17" width="1" height="1"/><rect x="33" y="17" width="2" height="1"/><rect x="0" y="18" width="7" height="1"/><rect x="8" y="18" width="1" height="1"/><rect x="16" y="18" width="1" height="1"/><rect x="20" y="18" width="4" height="1"/><rect x="27" y="18" width="1" height="1"/><rect x="29" y="18" width="1" height="1"/><rect x="31" y="18" width="1" height="1"/><rect x="3" y="19" width="1" height="1"/><rect x="9" y="19" width="4" height="1"/><rect x="17" y="19" width="2" height="1"/><rect x="22" y="19" width="1" height="1"/><rect x="24" y="19" width="3" height="1"/><rect x="29" y="19" width="1" height="1"/><rect x="32" y="19" width="2" height="1"/><rect x="1" y="20" width="2" height="1"/><rect x="5" y="20" width="2" height="1"/><rect x="9" y="20" width="3" height="1"/><rect x="14" y="20" width="2" height="1"/><rect x="20" y="20" width="2" height="1"/><rect x="24" y="20" width="1" height="1"/><rect x="28" y="20" width="1" height="1"/><rect x="31" y="20" width="6" height="1"/><rect x="1" y="21" width="1" height="1"/><rect x="11" y="21" width="6" height="1"/><rect x="19" y="21" width="2" height="1"/><rect x="22" y="21" width="2" height="1"/><rect x="25" y="21" width="1" height="1"/><rect x="27" y="21" width="1" height="1"/><rect x="30" y="21" width="1" height="1"/><rect x="33" y="21" width="4" height="1"/><rect x="2" y="22" width="3" height="1"/><rect x="6" y="22" width="1" height="1"/><rect x="8" y="22" width="2" height="1"/><rect x="12" y="22" width="3" height="1"/><rect x="16" y="22" width="4" height="1"/><rect x="22" y="22" width="1" height="1"/><rect x="24" y="22" width="2" height="1"/><rect x="27" y="22" width="1" height="1"/><rect x="29" y="22" width="5" height="1"/><rect x="35" y="22" width="2" height="1"/><rect x="1" y="23" width="4" height="1"/><rect x="8" y="23" width="2" height="1"/><rect x="11" y="23" width="1" height="1"/><rect x="16" y="23" width="2" height="1"/><rect x="19" y="23" width="1" height="1"/><rect x="23" y="23" width="1" height="1"/><rect x="27" y="23" width="1" height="1"/><rect x="29" y="23" width="1" height="1"/><rect x="32" y="23" width="5" height="1"/><rect x="1" y="24" width="6" height="1"/><rect x="8" y="24" width="2" height="1"/><rect x="13" y="24" width="2" height="1"/><rect x="17" y="24" width="4" height="1"/><rect x="22" y="24" width="1" height="1"/><rect x="24" y="24" width="1" height="1"/><rect x="28" y="24" width="2" height="1"/><rect x="31" y="24" width="3" height="1"/><rect x="36" y="24" width="1" height="1"/><rect x="1" y="25" width="1" height="1"/><rect x="4" y="25" width="2" height="1"/><rect x="7" y="25" width="1" height="1"/><rect x="9" y="25" width="1" height="1"/><rect x="13" y="25" width="1" height="1"/><rect x="15" y="25" width="6" height="1"/><rect x="23" y="25" width="1" height="1"/><rect x="29" y="25" width="2" height="1"/><rect x="32" y="25" width="2" height="1"/><rect x="36" y="25" width="1" height="1"/><rect x="1" y="26" width="1" height="1"/><rect x="4" y="26" width="3" height="1"/><rect x="8" y="26" width="6" height="1"/><rect x="15" y="26" width="2" height="1"/><rect x="19" y="26" width="1" height="1"/><rect x="22" y="26" width="1" height="1"/><rect x="24" y="26" width="2" height="1"/><rect x="27" y="26" width="1" height="1"/><rect x="29" y="26" width="3" height="1"/><rect x="34" y="26" width="2" height="1"/><rect x="0" y="27" width="1" height="1"/><rect x="2" y="27" width="1" height="1"/><rect x="4" y="27" width="1" height="1"/><rect x="8" y="27" width="1" height="1"/><rect x="10" y="27" width="2" height="1"/><rect x="13" y="27" width="3" height="1"/><rect x="19" y="27" width="1" height="1"/><rect x="22" y="27" width="1" height="1"/><rect x="24" y="27" width="3" height="1"/><rect x="30" y="27" width="4" height="1"/><rect x="35" y="27" width="2" height="1"/><rect x="0" y="28" width="3" height="1"/><rect x="5" y="28" width="3" height="1"/><rect x="9" y="28" width="1" height="1"/><rect x="12" y="28" width="3" height="1"/><rect x="19" y="28" width="1" height="1"/><rect x="22" y="28" width="4" height="1"/><rect x="27" y="28" width="8" height="1"/><rect x="8" y="29" width="3" height="1"/><rect x="12" y="29" width="1" height="1"/><rect x="14" y="29" width="3" height="1"/><rect x="21" y="29" width="4" height="1"/><rect x="26" y="29" width="3" height="1"/><rect x="32" y="29" width="1" height="1"/><rect x="34" y="29" width="1" height="1"/><rect x="36" y="29" width="1" height="1"/><rect x="0" y="30" width="7" height="1"/><rect x="10" y="30" width="1" height="1"/><rect x="13" y="30" width="1" height="1"/><rect x="16" y="30" width="2" height="1"/><rect x="19" y="30" width="2" height="1"/><rect x="24" y="30" width="1" height="1"/><rect x="26" y="30" width="3" height="1"/><rect x="30" y="30" width="1" height="1"/><rect x="32" y="30" width="1" height="1"/><rect x="34" y="30" width="1" height="1"/><rect x="36" y="30" width="1" height="1"/><rect x="0" y="31" width="1" height="1"/><rect x="6" y="31" width="1" height="1"/><rect x="9" y="31" width="3" height="1"/><rect x="13" y="31" width="1" height="1"/><rect x="15" y="31" width="1" height="1"/><rect x="18" y="31" width="1" height="1"/><rect x="21" y="31" width="2" height="1"/><rect x="24" y="31" width="3" height="1"/><rect x="28" y="31" width="1" height="1"/><rect x="32" y="31" width="1" height="1"/><rect x="34" y="31" width="1" height="1"/><rect x="0" y="32" width="1" height="1"/><rect x="2" y="32" width="3" height="1"/><rect x="6" y="32" width="1" height="1"/><rect x="9" y="32" width="3" height="1"/><rect x="15" y="32" width="1" height="1"/><rect x="17" y="32" width="3" height="1"/><rect x="22" y="32" width="1" height="1"/><rect x="25" y="32" width="1" height="1"/><rect x="27" y="32" width="6" height="1"/><rect x="34" y="32" width="2" height="1"/><rect x="0" y="33" width="1" height="1"/><rect x="2" y="33" width="3" height="1"/><rect x="6" y="33" width="1" height="1"/><rect x="8" y="33" width="3" height="1"/><rect x="12" y="33" width="3" height="1"/><rect x="16" y="33" width="1" height="1"/><rect x="18" y="33" width="1" height="1"/><rect x="27" y="33" width="1" height="1"/><rect x="30" y="33" width="7" height="1"/><rect x="0" y="34" width="1" height="1"/><rect x="2" y="34" width="3" height="1"/><rect x="6" y="34" width="1" height="1"/><rect x="9" y="34" width="6" height="1"/><rect x="23" y="34" width="1" height="1"/><rect x="28" y="34" width="4" height="1"/><rect x="34" y="34" width="1" height="1"/><rect x="0" y="35" width="1" height="1"/><rect x="6" y="35" width="1" height="1"/><rect x="8" y="35" width="3" height="1"/><rect x="14" y="35" width="1" height="1"/><rect x="16" y="35" width="4" height="1"/><rect x="22" y="35" width="1" height="1"/><rect x="24" y="35" width="1" height="1"/><rect x="28" y="35" width="3" height="1"/><rect x="32" y="35" width="2" height="1"/><rect x="35" y="35" width="1" height="1"/><rect x="0" y="36" width="7" height="1"/><rect x="9" y="36" width="1" height="1"/><rect x="11" y="36" width="1" height="1"/><rect x="13" y="36" width="1" height="1"/><rect x="17" y="36" width="1" height="1"/><rect x="19" y="36" width="6" height="1"/><rect x="26" y="36" width="4" height="1"/><rect x="31" y="36" width="3" height="1"/><rect x="35" y="36" width="2" height="1"/></g></svg>
<div class="a" style="left:445px;top:827px;width:28px;height:28px;border-radius:5px;background:linear-gradient(180deg,#f08a20 0,#f08a20 3px,#e52c10 4px,#e02a10 100%)"></div>
<svg class="a" style="left:445px;top:827px;width:28px;height:28px" viewBox="0 0 28 28"><path d="M7.5 9a6.5 6.5 0 0013 0" stroke="#fff" stroke-width="1.8" fill="none"/><text x="14" y="21.5" text-anchor="middle" font-size="4.5" font-weight="bold" fill="#fff" font-family="Liberation Sans">AliExpress</text></svg>
<div class="t" style="left:362px;top:910px;font-size:12.5px;color:#333">Digitalizar ou clique para download</div>
<div class="a" style="left:1400px;top:235px;width:192px;height:40px;background:#f2f7fc"></div>
<div class="a" style="left:1400px;top:285px;width:192px;height:40px;background:#fff"></div>
<div class="a" style="left:1400px;top:335px;width:192px;height:500px;background:#fff;box-shadow:0 1px 6px rgba(0,0,0,0.22)"></div>
<div class="a" style="left:1400px;top:384px;width:192px;height:1px;background:#e8e8e8"></div>
<div class="a" style="left:1380px;top:471px;width:150px;height:125px;border:3px solid #e1edfb;border-left:none;border-radius:0 8px 8px 0;background:#fff"></div>
<div class="t msg" style="left:1419px;top:485px;font-size:12px">60569781</div>
<div class="a" style="left:1400px;top:505px;width:115px;height:1px;background:#ddd"></div>
<div class="t msg" style="left:1419px;top:516px">C010-70 W27C0</div>
<div class="t msg" style="left:1422px;top:532px;letter-spacing:0.15px">0 DIP32 27C0...</div>
<div class="a" style="left:1535px;top:471px;width:40px;height:40px;border-radius:20px;background:#eee;overflow:hidden"><div class="a" style="left:14px;top:9px;width:12px;height:12px;border-radius:6px;background:#ddd"></div><div class="a" style="left:8px;top:26px;width:24px;height:20px;border-radius:12px;background:#ddd"></div></div>
<div class="t" style="left:1478px;top:600px;font-size:13.5px;color:#2a3fb0">Unread</div>
<div class="a" style="left:1380px;top:623px;width:150px;height:93px;background:#e3effd;border-radius:0 8px 8px 0"></div>
<div class="t msg" style="left:1420px;top:635px;font-size:13.8px">enhuma das 10</div>
<div class="t msg" style="left:1421px;top:653px;font-size:13.8px">é compativel</div>
<div class="t msg" style="left:1421px;top:671px;font-size:13.8px">dando erro de</div>
<div class="t" style="left:1478px;top:718px;font-size:13.5px;color:#2a3fb0">Unread</div>
<div class="a" style="left:1400px;top:783px;width:192px;height:52px;background:#fafafa;border-top:1px solid #eee"></div>
<div class="a" style="left:1380px;top:791px;width:171px;height:36px;border-radius:18px;border:1px solid #ddd;background:#fff"></div>
<svg class="a" style="left:1515px;top:797px;width:23px;height:23px" viewBox="0 0 23 23"><circle cx="11.5" cy="11.5" r="10.5" stroke="#bbb" stroke-width="1.1" fill="none"/><circle cx="8" cy="9" r="1" fill="#bbb"/><circle cx="15" cy="9" r="1" fill="#bbb"/><path d="M6.5 13a5 5 0 0010 0" stroke="#bbb" stroke-width="1.1" fill="none"/></svg>
<svg class="a" style="left:1560px;top:797px;width:22px;height:18px" viewBox="0 0 22 18"><path d="M0 0l22 9L0 18l3-9z" fill="#a9a9a9"/><path d="M3 9h8" stroke="#fafafa" stroke-width="1.2"/></svg>
<div class="a" style="left:0;top:970px;width:1903px;height:70px;background:#e8e8e8;border-top:1px solid #e2e2e2"></div>
<div class="t" style="left:143px;top:1006px;font-size:17px;font-weight:bold;color:#222">Help</div>
<div class="t" style="left:144px;top:1035px;font-size:13px;color:#999;--tw:701;transform:scaleX(1.1189)">Help Center, Disputes &amp; Reports, Buyer Protection, Report IPR infringement, Regulated Information, Integrity</div>
<div class="t" style="left:951px;top:1006px;font-size:17px;font-weight:bold;color:#222">AliExpress Multi-Language Sites</div>
<div class="t" style="left:951px;top:1035px;font-size:13px;color:#999;--tw:789;transform:scaleX(1.0883)">Russian, Portuguese, Spanish, French, German, Italian, Dutch, Turkish, Japanese, Korean, Thai, Vietnamese, Arabic, Hebrew</div>
<div class="a" style="left:497px;top:235px;width:926px;height:603px;background:#f0f0f0;border:1px solid #6b6b6b;box-shadow:0 3px 14px rgba(0,0,0,0.3)"></div>
<div class="a" style="left:498px;top:236px;width:924px;height:50px;background:#fff"></div>
<div class="a" style="left:498px;top:286px;width:924px;height:1px;background:#a0a0a0"></div>
<svg class="a" style="left:505px;top:242px;width:16px;height:16px" viewBox="0 0 16 16"><rect width="16" height="16" fill="#f4f000"/><text x="1" y="10" font-family="Liberation Sans" font-weight="bold" font-size="10" fill="#e00000" stroke="#600" stroke-width="0.4">GQ</text><path d="M3 14l2-3M6 14l2-3M9 14l2-3M12 14l2-3" stroke="#000" stroke-width="1.2"/></svg>
<div class="t" style="left:527px;top:245px;font-size:12.5px;color:#000;--tw:91;transform:scaleX(0.9224)">Untitled - USBPrg</div>
<div class="a" style="left:1303px;top:250px;width:10px;height:1px;background:#000"></div>
<div class="a" style="left:1348px;top:245px;width:10px;height:10px;border:1px solid #000"></div>
<svg class="a" style="left:1393px;top:244px;width:12px;height:12px" viewBox="0 0 12 12"><path d="M1 1l10 10M11 1L1 11" stroke="#000" stroke-width="1"/></svg>
<div class="t menu" style="left:505px;top:269.5px">Arquivo</div>
<div class="t menu" style="left:561px;top:269.5px">Editar</div>
<div class="t menu" style="left:605px;top:269.5px">Ver</div>
<div class="t menu" style="left:635px;top:269.5px">Dispositivo</div>
<div class="t menu" style="left:707px;top:269.5px">Comando</div>
<div class="t menu" style="left:774px;top:269.5px">Verificar H/W</div>
<div class="t menu" style="left:858px;top:269.5px">Configuracão</div>
<div class="t menu" style="left:944px;top:269.5px">Ajuda</div>
<div class="a" style="left:502px;top:290px;width:2px;height:33px;border-left:1px solid #fff;border-right:1px solid #a0a0a0"></div>
<div class="a" style="left:584px;top:290px;width:2px;height:31px;border-left:1px solid #a0a0a0;border-right:1px solid #fff"></div>
<div class="a" style="left:817px;top:290px;width:2px;height:31px;border-left:1px solid #a0a0a0;border-right:1px solid #fff"></div>
<div class="a" style="left:937px;top:290px;width:2px;height:31px;border-left:1px solid #a0a0a0;border-right:1px solid #fff"></div>
<div class="a" style="left:1019px;top:290px;width:2px;height:31px;border-left:1px solid #a0a0a0;border-right:1px solid #fff"></div>
<div class="a" style="left:1101px;top:290px;width:2px;height:31px;border-left:1px solid #a0a0a0;border-right:1px solid #fff"></div>
<div class="a" style="left:1222px;top:290px;width:2px;height:31px;border-left:1px solid #a0a0a0;border-right:1px solid #fff"></div>
<div class="a" style="left:1263px;top:290px;width:2px;height:31px;border-left:1px solid #a0a0a0;border-right:1px solid #fff"></div>
<svg class="a" style="left:514px;top:294px;width:18px;height:16px" viewBox="0 0 18 16"><path d="M1 5h5l1 1.5h6V14H1z" fill="#f8f0a0" stroke="#000" stroke-width="1"/><path d="M1 14l3-6h13l-3 6z" fill="#a8a040" stroke="#000" stroke-width="1"/><path d="M10 4c1-2.5 4-3 6-1.5" stroke="#000" stroke-width="1" fill="none"/><path d="M15 1l1.5 2.5L13.5 4" stroke="#000" stroke-width="1" fill="none"/></svg>
<svg class="a" style="left:553px;top:295px;width:15px;height:15px" viewBox="0 0 15 15"><rect x="0.5" y="0.5" width="14" height="14" fill="#000"/><rect x="2" y="1" width="11" height="7" fill="#8a8a40"/><rect x="3" y="10" width="9" height="4" fill="#000"/><rect x="9" y="11" width="2" height="2" fill="#fff"/></svg>
<svg class="a" style="left:590px;top:291px;width:32px;height:28px;overflow:visible" viewBox="0 0 32 28"><path d="M0.5 11 L9 5.5 L19 0.5 L30 9 V12 L11.5 25 L0.5 15 Z" fill="#fafafa"/><path d="M11 20 L30 8.5 V12.5 L11.5 24.5Z" fill="#b8b8b8"/><path d="M3 16.5 Q3 13 7 13.5" stroke="#c0c0c0" stroke-width="1.5" fill="none"/><path d="M0.5 11 L9 5.5" stroke="#000" stroke-width="1" stroke-dasharray="1 1.3"/><path d="M0.5 11 V14.5" stroke="#aaa" stroke-width="1"/><path d="M19 0.5 L30 9 V12.5" stroke="#000" stroke-width="1.6" fill="none"/><path d="M0.5 14.5 L11.5 24.5" stroke="#000" stroke-width="1.6"/><path d="M11.5 20.4V25.9" stroke="#000" stroke-width="1.3"/><path d="M12.7 20.9V23.9" stroke="#fff" stroke-width="0.7"/><path d="M15.2 17.9V23.4" stroke="#000" stroke-width="1.3"/><path d="M16.4 18.4V21.4" stroke="#fff" stroke-width="0.7"/><path d="M18.9 15.4V20.9" stroke="#000" stroke-width="1.3"/><path d="M20.1 15.9V18.9" stroke="#fff" stroke-width="0.7"/><path d="M22.6 12.9V18.4" stroke="#000" stroke-width="1.3"/><path d="M23.8 13.4V16.4" stroke="#fff" stroke-width="0.7"/><path d="M26.3 10.4V15.9" stroke="#000" stroke-width="1.3"/><path d="M27.5 10.9V13.9" stroke="#fff" stroke-width="0.7"/><text transform="translate(10.5 12.5) scale(1 1)" font-family="Liberation Sans" font-weight="bold" font-size="13" fill="#22ee22" stroke="#000" stroke-width="2" paint-order="stroke" stroke-linejoin="round">D</text></svg>
<svg class="a" style="left:628px;top:291px;width:32px;height:28px;overflow:visible" viewBox="0 0 32 28"><path d="M0.5 11 L9 5.5 L19 0.5 L30 9 V12 L11.5 25 L0.5 15 Z" fill="#fafafa"/><path d="M11 20 L30 8.5 V12.5 L11.5 24.5Z" fill="#b8b8b8"/><path d="M3 16.5 Q3 13 7 13.5" stroke="#c0c0c0" stroke-width="1.5" fill="none"/><path d="M0.5 11 L9 5.5" stroke="#000" stroke-width="1" stroke-dasharray="1 1.3"/><path d="M0.5 11 V14.5" stroke="#aaa" stroke-width="1"/><path d="M19 0.5 L30 9 V12.5" stroke="#000" stroke-width="1.6" fill="none"/><path d="M0.5 14.5 L11.5 24.5" stroke="#000" stroke-width="1.6"/><path d="M11.5 20.4V25.9" stroke="#000" stroke-width="1.3"/><path d="M12.7 20.9V23.9" stroke="#fff" stroke-width="0.7"/><path d="M15.2 17.9V23.4" stroke="#000" stroke-width="1.3"/><path d="M16.4 18.4V21.4" stroke="#fff" stroke-width="0.7"/><path d="M18.9 15.4V20.9" stroke="#000" stroke-width="1.3"/><path d="M20.1 15.9V18.9" stroke="#fff" stroke-width="0.7"/><path d="M22.6 12.9V18.4" stroke="#000" stroke-width="1.3"/><path d="M23.8 13.4V16.4" stroke="#fff" stroke-width="0.7"/><path d="M26.3 10.4V15.9" stroke="#000" stroke-width="1.3"/><path d="M27.5 10.9V13.9" stroke="#fff" stroke-width="0.7"/><text transform="translate(10.5 12.5) scale(1 1)" font-family="Liberation Sans" font-weight="bold" font-size="13" fill="#22ee22" stroke="#000" stroke-width="2" paint-order="stroke" stroke-linejoin="round">R</text><path d="M16 19h5v-3.5l6 6-6 6V24h-5z" fill="#22ee22" stroke="#000" stroke-width="1"/></svg>
<svg class="a" style="left:666px;top:291px;width:32px;height:28px;overflow:visible" viewBox="0 0 32 28"><path d="M0.5 11 L9 5.5 L19 0.5 L30 9 V12 L11.5 25 L0.5 15 Z" fill="#fafafa"/><path d="M11 20 L30 8.5 V12.5 L11.5 24.5Z" fill="#b8b8b8"/><path d="M3 16.5 Q3 13 7 13.5" stroke="#c0c0c0" stroke-width="1.5" fill="none"/><path d="M0.5 11 L9 5.5" stroke="#000" stroke-width="1" stroke-dasharray="1 1.3"/><path d="M0.5 11 V14.5" stroke="#aaa" stroke-width="1"/><path d="M19 0.5 L30 9 V12.5" stroke="#000" stroke-width="1.6" fill="none"/><path d="M0.5 14.5 L11.5 24.5" stroke="#000" stroke-width="1.6"/><path d="M11.5 20.4V25.9" stroke="#000" stroke-width="1.3"/><path d="M12.7 20.9V23.9" stroke="#fff" stroke-width="0.7"/><path d="M15.2 17.9V23.4" stroke="#000" stroke-width="1.3"/><path d="M16.4 18.4V21.4" stroke="#fff" stroke-width="0.7"/><path d="M18.9 15.4V20.9" stroke="#000" stroke-width="1.3"/><path d="M20.1 15.9V18.9" stroke="#fff" stroke-width="0.7"/><path d="M22.6 12.9V18.4" stroke="#000" stroke-width="1.3"/><path d="M23.8 13.4V16.4" stroke="#fff" stroke-width="0.7"/><path d="M26.3 10.4V15.9" stroke="#000" stroke-width="1.3"/><path d="M27.5 10.9V13.9" stroke="#fff" stroke-width="0.7"/><text transform="translate(11 11.5) scale(1 1)" font-family="Liberation Sans" font-weight="bold" font-size="13" fill="#22ee22" stroke="#000" stroke-width="2" paint-order="stroke" stroke-linejoin="round">?</text><text transform="translate(17 26) scale(1 1)" font-family="Liberation Sans" font-weight="bold" font-size="12" fill="#22ee22" stroke="#000" stroke-width="2" paint-order="stroke" stroke-linejoin="round">V</text></svg>
<svg class="a" style="left:704px;top:291px;width:32px;height:28px;overflow:visible" viewBox="0 0 32 28"><path d="M0.5 11 L9 5.5 L19 0.5 L30 9 V12 L11.5 25 L0.5 15 Z" fill="#fafafa"/><path d="M11 20 L30 8.5 V12.5 L11.5 24.5Z" fill="#b8b8b8"/><path d="M3 16.5 Q3 13 7 13.5" stroke="#c0c0c0" stroke-width="1.5" fill="none"/><path d="M0.5 11 L9 5.5" stroke="#000" stroke-width="1" stroke-dasharray="1 1.3"/><path d="M0.5 11 V14.5" stroke="#aaa" stroke-width="1"/><path d="M19 0.5 L30 9 V12.5" stroke="#000" stroke-width="1.6" fill="none"/><path d="M0.5 14.5 L11.5 24.5" stroke="#000" stroke-width="1.6"/><path d="M11.5 20.4V25.9" stroke="#000" stroke-width="1.3"/><path d="M12.7 20.9V23.9" stroke="#fff" stroke-width="0.7"/><path d="M15.2 17.9V23.4" stroke="#000" stroke-width="1.3"/><path d="M16.4 18.4V21.4" stroke="#fff" stroke-width="0.7"/><path d="M18.9 15.4V20.9" stroke="#000" stroke-width="1.3"/><path d="M20.1 15.9V18.9" stroke="#fff" stroke-width="0.7"/><path d="M22.6 12.9V18.4" stroke="#000" stroke-width="1.3"/><path d="M23.8 13.4V16.4" stroke="#fff" stroke-width="0.7"/><path d="M26.3 10.4V15.9" stroke="#000" stroke-width="1.3"/><path d="M27.5 10.9V13.9" stroke="#fff" stroke-width="0.7"/><text transform="translate(9.5 12.5) scale(1 1)" font-family="Liberation Sans" font-weight="bold" font-size="13" fill="#22ee22" stroke="#000" stroke-width="2" paint-order="stroke" stroke-linejoin="round">ID</text></svg>
<div class="a" style="left:739px;top:288px;width:38px;height:34px;border-top:1px solid #fff;border-left:1px solid #fff;border-right:1px solid #a0a0a0;border-bottom:1px solid #a0a0a0"></div>
<svg class="a" style="left:742px;top:291px;width:32px;height:28px;overflow:visible" viewBox="0 0 32 28"><path d="M0.5 11 L9 5.5 L19 0.5 L30 9 V12 L11.5 25 L0.5 15 Z" fill="#fafafa"/><path d="M11 20 L30 8.5 V12.5 L11.5 24.5Z" fill="#b8b8b8"/><path d="M3 16.5 Q3 13 7 13.5" stroke="#c0c0c0" stroke-width="1.5" fill="none"/><path d="M0.5 11 L9 5.5" stroke="#000" stroke-width="1" stroke-dasharray="1 1.3"/><path d="M0.5 11 V14.5" stroke="#aaa" stroke-width="1"/><path d="M19 0.5 L30 9 V12.5" stroke="#000" stroke-width="1.6" fill="none"/><path d="M0.5 14.5 L11.5 24.5" stroke="#000" stroke-width="1.6"/><path d="M11.5 20.4V25.9" stroke="#000" stroke-width="1.3"/><path d="M12.7 20.9V23.9" stroke="#fff" stroke-width="0.7"/><path d="M15.2 17.9V23.4" stroke="#000" stroke-width="1.3"/><path d="M16.4 18.4V21.4" stroke="#fff" stroke-width="0.7"/><path d="M18.9 15.4V20.9" stroke="#000" stroke-width="1.3"/><path d="M20.1 15.9V18.9" stroke="#fff" stroke-width="0.7"/><path d="M22.6 12.9V18.4" stroke="#000" stroke-width="1.3"/><path d="M23.8 13.4V16.4" stroke="#fff" stroke-width="0.7"/><path d="M26.3 10.4V15.9" stroke="#000" stroke-width="1.3"/><path d="M27.5 10.9V13.9" stroke="#fff" stroke-width="0.7"/><text transform="translate(2 12.5) scale(0.88 1)" font-family="Liberation Sans" font-weight="bold" font-size="12" fill="#22ee22" stroke="#000" stroke-width="2" paint-order="stroke" stroke-linejoin="round">CFG</text></svg>
<svg class="a" style="left:779px;top:298px;width:31px;height:14px" viewBox="0 0 31 14"><text transform="translate(0 13) scale(1 1)" font-family="Liberation Sans" font-weight="bold" font-size="14" fill="#22ee22" stroke="#000" stroke-width="2" paint-order="stroke" stroke-linejoin="round">A</text><path d="M13 5h5M13 8.5h5M17 3l-3 2M14 10.5l3-2" stroke="#22dd22" stroke-width="1.3"/><text transform="translate(19 13) scale(1 1)" font-family="Liberation Sans" font-weight="bold" font-size="14" fill="#22ee22" stroke="#000" stroke-width="2" paint-order="stroke" stroke-linejoin="round">B</text></svg>
<svg class="a" style="left:824px;top:298px;width:33px;height:14px" viewBox="0 0 33 14"><text transform="translate(0 13) scale(1 1)" font-family="Liberation Sans" font-weight="bold" font-size="14" fill="#22ee22" stroke="#000" stroke-width="2" paint-order="stroke" stroke-linejoin="round">8</text><path d="M9 5h5M9 8.5h5M13 3l-3 2M10 10.5l3-2" stroke="#22dd22" stroke-width="1.3"/><text transform="translate(14 13) scale(1 1)" font-family="Liberation Sans" font-weight="bold" font-size="14" fill="#22ee22" stroke="#000" stroke-width="2" paint-order="stroke" stroke-linejoin="round">16</text></svg>
<svg class="a" style="left:862px;top:292px;width:31px;height:21px" viewBox="0 0 31 21"><rect x="0.5" y="0.5" width="30" height="20" fill="#0a4a80" stroke="#06203a"/><rect x="1.5" y="1.5" width="27" height="18" fill="none" stroke="#4ac8e8" stroke-dasharray="1 1"/><rect x="5" y="3" width="14" height="3" fill="#fff"/><rect x="4.0" y="8.0" width="2.6" height="2" fill="#fff"/><rect x="8.3" y="8.0" width="2.6" height="2" fill="#fff"/><rect x="12.6" y="8.0" width="2.6" height="2" fill="#fff"/><rect x="16.9" y="8.0" width="2.6" height="2" fill="#fff"/><rect x="21.2" y="8.0" width="2.6" height="2" fill="#fff"/><rect x="25.5" y="8.0" width="2.6" height="2" fill="#fff"/><rect x="4.0" y="11.7" width="2.6" height="2" fill="#fff"/><rect x="8.3" y="11.7" width="2.6" height="2" fill="#fff"/><rect x="12.6" y="11.7" width="2.6" height="2" fill="#fff"/><rect x="16.9" y="11.7" width="2.6" height="2" fill="#fff"/><rect x="21.2" y="11.7" width="2.6" height="2" fill="#fff"/><rect x="25.5" y="11.7" width="2.6" height="2" fill="#fff"/><rect x="4.0" y="15.4" width="2.6" height="2" fill="#fff"/><rect x="8.3" y="15.4" width="2.6" height="2" fill="#fff"/><rect x="12.6" y="15.4" width="2.6" height="2" fill="#fff"/><rect x="16.9" y="15.4" width="2.6" height="2" fill="#fff"/><rect x="21.2" y="15.4" width="2.6" height="2" fill="#fff"/><rect x="25.5" y="15.4" width="2.6" height="2" fill="#fff"/></svg>
<svg class="a" style="left:899px;top:291px;width:32px;height:28px" viewBox="0 0 32 28"><text transform="translate(0 12) scale(1 1)" font-family="Liberation Sans" font-weight="bold" font-size="14" fill="#22ee22" stroke="#000" stroke-width="2" paint-order="stroke" stroke-linejoin="round">01</text><circle cx="22" cy="7" r="2" fill="#22dd22" stroke="#053005" stroke-width="0.8"/><circle cx="28" cy="7" r="2" fill="#22dd22" stroke="#053005" stroke-width="0.8"/><circle cx="3" cy="21" r="2" fill="#22dd22" stroke="#053005" stroke-width="0.8"/><circle cx="9" cy="21" r="2" fill="#22dd22" stroke="#053005" stroke-width="0.8"/><text transform="translate(12 27) scale(1 1)" font-family="Liberation Sans" font-weight="bold" font-size="14" fill="#22ee22" stroke="#000" stroke-width="2" paint-order="stroke" stroke-linejoin="round">FF</text></svg>
<svg class="a" style="left:944px;top:291px;width:32px;height:28px;overflow:visible" viewBox="0 0 32 28"><path d="M0.5 11 L9 5.5 L19 0.5 L30 9 V12 L11.5 25 L0.5 15 Z" fill="#fafafa"/><path d="M11 20 L30 8.5 V12.5 L11.5 24.5Z" fill="#b8b8b8"/><path d="M3 16.5 Q3 13 7 13.5" stroke="#c0c0c0" stroke-width="1.5" fill="none"/><path d="M0.5 11 L9 5.5" stroke="#000" stroke-width="1" stroke-dasharray="1 1.3"/><path d="M0.5 11 V14.5" stroke="#aaa" stroke-width="1"/><path d="M19 0.5 L30 9 V12.5" stroke="#000" stroke-width="1.6" fill="none"/><path d="M0.5 14.5 L11.5 24.5" stroke="#000" stroke-width="1.6"/><path d="M11.5 20.4V25.9" stroke="#000" stroke-width="1.3"/><path d="M12.7 20.9V23.9" stroke="#fff" stroke-width="0.7"/><path d="M15.2 17.9V23.4" stroke="#000" stroke-width="1.3"/><path d="M16.4 18.4V21.4" stroke="#fff" stroke-width="0.7"/><path d="M18.9 15.4V20.9" stroke="#000" stroke-width="1.3"/><path d="M20.1 15.9V18.9" stroke="#fff" stroke-width="0.7"/><path d="M22.6 12.9V18.4" stroke="#000" stroke-width="1.3"/><path d="M23.8 13.4V16.4" stroke="#fff" stroke-width="0.7"/><path d="M26.3 10.4V15.9" stroke="#000" stroke-width="1.3"/><path d="M27.5 10.9V13.9" stroke="#fff" stroke-width="0.7"/><text transform="translate(10.5 12.5) scale(1 1)" font-family="Liberation Sans" font-weight="bold" font-size="13" fill="#22ee22" stroke="#000" stroke-width="2" paint-order="stroke" stroke-linejoin="round">E</text></svg>
<svg class="a" style="left:982px;top:291px;width:32px;height:28px;overflow:visible" viewBox="0 0 32 28"><path d="M0.5 11 L9 5.5 L19 0.5 L30 9 V12 L11.5 25 L0.5 15 Z" fill="#fafafa"/><path d="M11 20 L30 8.5 V12.5 L11.5 24.5Z" fill="#b8b8b8"/><path d="M3 16.5 Q3 13 7 13.5" stroke="#c0c0c0" stroke-width="1.5" fill="none"/><path d="M0.5 11 L9 5.5" stroke="#000" stroke-width="1" stroke-dasharray="1 1.3"/><path d="M0.5 11 V14.5" stroke="#aaa" stroke-width="1"/><path d="M19 0.5 L30 9 V12.5" stroke="#000" stroke-width="1.6" fill="none"/><path d="M0.5 14.5 L11.5 24.5" stroke="#000" stroke-width="1.6"/><path d="M11.5 20.4V25.9" stroke="#000" stroke-width="1.3"/><path d="M12.7 20.9V23.9" stroke="#fff" stroke-width="0.7"/><path d="M15.2 17.9V23.4" stroke="#000" stroke-width="1.3"/><path d="M16.4 18.4V21.4" stroke="#fff" stroke-width="0.7"/><path d="M18.9 15.4V20.9" stroke="#000" stroke-width="1.3"/><path d="M20.1 15.9V18.9" stroke="#fff" stroke-width="0.7"/><path d="M22.6 12.9V18.4" stroke="#000" stroke-width="1.3"/><path d="M23.8 13.4V16.4" stroke="#fff" stroke-width="0.7"/><path d="M26.3 10.4V15.9" stroke="#000" stroke-width="1.3"/><path d="M27.5 10.9V13.9" stroke="#fff" stroke-width="0.7"/><text transform="translate(10.5 12.5) scale(1 1)" font-family="Liberation Sans" font-weight="bold" font-size="13" fill="#22ee22" stroke="#000" stroke-width="2" paint-order="stroke" stroke-linejoin="round">B</text></svg>
<svg class="a" style="left:1026px;top:291px;width:32px;height:28px;overflow:visible" viewBox="0 0 32 28"><path d="M0.5 11 L9 5.5 L19 0.5 L30 9 V12 L11.5 25 L0.5 15 Z" fill="#fafafa"/><path d="M11 20 L30 8.5 V12.5 L11.5 24.5Z" fill="#b8b8b8"/><path d="M3 16.5 Q3 13 7 13.5" stroke="#c0c0c0" stroke-width="1.5" fill="none"/><path d="M0.5 11 L9 5.5" stroke="#000" stroke-width="1" stroke-dasharray="1 1.3"/><path d="M0.5 11 V14.5" stroke="#aaa" stroke-width="1"/><path d="M19 0.5 L30 9 V12.5" stroke="#000" stroke-width="1.6" fill="none"/><path d="M0.5 14.5 L11.5 24.5" stroke="#000" stroke-width="1.6"/><path d="M11.5 20.4V25.9" stroke="#000" stroke-width="1.3"/><path d="M12.7 20.9V23.9" stroke="#fff" stroke-width="0.7"/><path d="M15.2 17.9V23.4" stroke="#000" stroke-width="1.3"/><path d="M16.4 18.4V21.4" stroke="#fff" stroke-width="0.7"/><path d="M18.9 15.4V20.9" stroke="#000" stroke-width="1.3"/><path d="M20.1 15.9V18.9" stroke="#fff" stroke-width="0.7"/><path d="M22.6 12.9V18.4" stroke="#000" stroke-width="1.3"/><path d="M23.8 13.4V16.4" stroke="#fff" stroke-width="0.7"/><path d="M26.3 10.4V15.9" stroke="#000" stroke-width="1.3"/><path d="M27.5 10.9V13.9" stroke="#fff" stroke-width="0.7"/><text transform="translate(13 28) scale(1 1)" font-family="Liberation Sans" font-weight="bold" font-size="13" fill="#22ee22" stroke="#000" stroke-width="2" paint-order="stroke" stroke-linejoin="round">W</text><path d="M14 1h5l-4 4h4l-5 5" stroke="#22dd22" stroke-width="1.6" fill="none"/></svg>
<svg class="a" style="left:1064px;top:291px;width:32px;height:28px;overflow:visible" viewBox="0 0 32 28"><path d="M0.5 11 L9 5.5 L19 0.5 L30 9 V12 L11.5 25 L0.5 15 Z" fill="#fafafa"/><path d="M11 20 L30 8.5 V12.5 L11.5 24.5Z" fill="#b8b8b8"/><path d="M3 16.5 Q3 13 7 13.5" stroke="#c0c0c0" stroke-width="1.5" fill="none"/><path d="M0.5 11 L9 5.5" stroke="#000" stroke-width="1" stroke-dasharray="1 1.3"/><path d="M0.5 11 V14.5" stroke="#aaa" stroke-width="1"/><path d="M19 0.5 L30 9 V12.5" stroke="#000" stroke-width="1.6" fill="none"/><path d="M0.5 14.5 L11.5 24.5" stroke="#000" stroke-width="1.6"/><path d="M11.5 20.4V25.9" stroke="#000" stroke-width="1.3"/><path d="M12.7 20.9V23.9" stroke="#fff" stroke-width="0.7"/><path d="M15.2 17.9V23.4" stroke="#000" stroke-width="1.3"/><path d="M16.4 18.4V21.4" stroke="#fff" stroke-width="0.7"/><path d="M18.9 15.4V20.9" stroke="#000" stroke-width="1.3"/><path d="M20.1 15.9V18.9" stroke="#fff" stroke-width="0.7"/><path d="M22.6 12.9V18.4" stroke="#000" stroke-width="1.3"/><path d="M23.8 13.4V16.4" stroke="#fff" stroke-width="0.7"/><path d="M26.3 10.4V15.9" stroke="#000" stroke-width="1.3"/><path d="M27.5 10.9V13.9" stroke="#fff" stroke-width="0.7"/><rect x="10" y="7" width="11" height="9" fill="#60c060" stroke="#053005" stroke-width="0.8"/><path d="M12 7V4a3.5 3.5 0 017 0v3" stroke="#777" stroke-width="1.5" fill="none"/><text transform="translate(21 29) scale(1 1)" font-family="Liberation Sans" font-weight="bold" font-size="13" fill="#22ee22" stroke="#000" stroke-width="2" paint-order="stroke" stroke-linejoin="round">L</text></svg>
<svg class="a" style="left:1107px;top:292px;width:32px;height:28px" viewBox="0 0 32 28"><path d="M2 2h7M2 5h7M2 8h7M2 11h7" stroke="#f0e860" stroke-width="1.5"/><rect x="10" y="3" width="5" height="5" fill="#2040d0"/><rect x="14" y="7" width="5" height="5" fill="#20a040"/><rect x="18" y="10" width="5" height="5" fill="#e02020"/><text transform="translate(1 27) scale(1 1)" font-family="Liberation Sans" font-weight="bold" font-size="12" fill="#22ee22" stroke="#000" stroke-width="2" paint-order="stroke" stroke-linejoin="round">Auto</text></svg>
<svg class="a" style="left:1151px;top:293px;width:22px;height:21px" viewBox="0 0 22 21"><path d="M3 4L21 14L3 20z" fill="#b0b0b0"/><path d="M1 1L18 10L1 18z" fill="#20a020"/></svg>
<svg class="a" style="left:1190px;top:294px;width:22px;height:21px" viewBox="0 0 22 21"><rect x="3" y="3" width="18" height="18" fill="#b0b0b0"/><rect x="0" y="0" width="17" height="16" fill="#ee1010"/></svg>
<svg class="a" style="left:1235px;top:293px;width:14px;height:18px" viewBox="0 0 14 18"><text x="7" y="15" text-anchor="middle" font-family="Liberation Sans" font-weight="bold" font-size="17" fill="#f0e040" stroke="#000" stroke-width="0.9" paint-order="stroke">?</text></svg>
<div class="t" style="left:516px;top:325px;font-family:'Liberation Serif',serif;font-weight:bold;font-style:italic;font-size:17px;color:#0a8c0a;--tw:89;transform:scaleX(1.5973)">GQ-4x4</div>
<svg class="a" style="left:510px;top:384px;width:10px;height:17px" viewBox="0 0 10 17"><path d="M0 0L9 8.5L0 17z" fill="#838383"/></svg>
<div class="t lb" style="left:518px;width:100px;text-align:center;top:386px;transform:scaleX(0.91);transform-origin:50% 0">Dispositivo</div>
<svg class="a" style="left:510px;top:434px;width:10px;height:17px" viewBox="0 0 10 17"><path d="M0 0L9 8.5L0 17z" fill="#838383"/></svg>
<div class="t lb" style="left:518px;width:100px;text-align:center;top:436px;transform:scaleX(0.91);transform-origin:50% 0">ID</div>
<svg class="a" style="left:510px;top:484px;width:10px;height:17px" viewBox="0 0 10 17"><path d="M0 0L9 8.5L0 17z" fill="#838383"/></svg>
<div class="t lb" style="left:518px;width:100px;text-align:center;top:486px;transform:scaleX(0.91);transform-origin:50% 0">Ler</div>
<svg class="a" style="left:510px;top:534px;width:10px;height:17px" viewBox="0 0 10 17"><path d="M0 0L9 8.5L0 17z" fill="#838383"/></svg>
<div class="t lb" style="left:518px;width:100px;text-align:center;top:536px;transform:scaleX(0.91);transform-origin:50% 0">Apagar</div>
<svg class="a" style="left:510px;top:584px;width:10px;height:17px" viewBox="0 0 10 17"><path d="M0 0L9 8.5L0 17z" fill="#838383"/></svg>
<div class="t lb" style="left:518px;width:100px;text-align:center;top:586px;transform:scaleX(0.91);transform-origin:50% 0">Verif. Branco</div>
<svg class="a" style="left:510px;top:634px;width:10px;height:17px" viewBox="0 0 10 17"><path d="M0 0L9 8.5L0 17z" fill="#838383"/></svg>
<div class="t lb" style="left:518px;width:100px;text-align:center;top:636px;transform:scaleX(0.91);transform-origin:50% 0">Escrever</div>
<svg class="a" style="left:510px;top:684px;width:10px;height:17px" viewBox="0 0 10 17"><path d="M0 0L9 8.5L0 17z" fill="#838383"/></svg>
<div class="t lb" style="left:518px;width:100px;text-align:center;top:686px;transform:scaleX(0.91);transform-origin:50% 0">Verificar</div>
<svg class="a" style="left:510px;top:734px;width:10px;height:17px" viewBox="0 0 10 17"><path d="M0 0L9 8.5L0 17z" fill="#838383"/></svg>
<div class="t lb" style="left:518px;width:100px;text-align:center;top:736px;transform:scaleX(0.91);transform-origin:50% 0">Opcões</div>
<div class="a" style="left:498px;top:795px;width:124px;height:21px;background:#d6d3ce"></div>
<svg class="a" style="left:517px;top:794px;width:95px;height:23px" viewBox="0 0 95 23"><defs><linearGradient id="chg" x1="0" y1="0" x2="1" y2="1"><stop offset="0" stop-color="#777"/><stop offset="0.5" stop-color="#222"/><stop offset="1" stop-color="#000"/></linearGradient></defs><path d="M20 11.2H68" stroke="#111" stroke-width="1.3"/><rect x="3.3" y="1.2" width="16.3" height="11.4" rx="1" fill="#e4e4e4" stroke="#555" stroke-width="0.8"/><rect x="5" y="3" width="11.5" height="8" fill="#0814c8"/><rect x="6.5" y="4.5" width="1" height="2" fill="#fff"/><rect x="1.6" y="14.9" width="18.9" height="5.7" rx="1" fill="#e8e8e8" stroke="#444" stroke-width="0.8"/><path d="M3 18h5" stroke="#4c4" stroke-width="1"/><path d="M13 15.5v4.5M15 15.5v4.5M17 15.5v4.5" stroke="#bbb" stroke-width="0.6"/><path d="M32.5 9L41.2 17.8L57.2 1.8" stroke="#22ee22" stroke-width="3.2" fill="none"/><path d="M67.5 10.3L82.4 1.4L92.1 8.3L76 21.2Z" fill="url(#chg)"/><path d="M77.9 19.7l1 3" stroke="#d8c850" stroke-width="1.3"/><path d="M80.3 17.7l1 3" stroke="#d8c850" stroke-width="1.3"/><path d="M82.8 15.8l1 3" stroke="#d8c850" stroke-width="1.3"/><path d="M85.2 13.8l1 3" stroke="#d8c850" stroke-width="1.3"/><path d="M87.6 11.9l1 3" stroke="#d8c850" stroke-width="1.3"/><path d="M90.0 10.0l1 3" stroke="#d8c850" stroke-width="1.3"/></svg>
<div class="a" style="left:624px;top:323px;width:89px;height:23px;background:#f0f0f0;border-top:1px solid #fff;border-left:1px solid #fff;border-right:1px solid #a0a0a0"></div>
<div class="t tabw" style="left:631px;top:327px;--tw:74;transform:scaleX(1.1009)">Mensagens</div>
<div class="a" style="left:713px;top:325px;width:133px;height:21px;border-top:1px solid #fff;border-right:1px solid #a0a0a0"></div>
<div class="t tabw" style="left:717px;top:329px;transform:scaleX(1.1)">Memoria de Código</div>
<div class="a" style="left:623px;top:345px;width:535px;height:449px;background:#fffff0;border-top:2px solid #696969;border-left:2px solid #696969;border-right:1px solid #fff;border-bottom:2px solid #696969;overflow:hidden"></div>
<div class="a" style="left:625px;top:347.5px;width:514px;height:442.5px;overflow:hidden"><div class="a" style="left:-625px;top:-347.5px"><div class="t log" style="left:627px;top:341px">Verifique o tipo de dispositivo e a Direção do Chip em seu</div><div class="t log" style="left:627px;top:356px">local.</div><div class="t log" style="left:627px;top:371px">Alguns Chips OEM podem ser compativeis con Chip ID</div><div class="t log" style="left:627px;top:386px">Continuar?</div><div class="t log" style="left:627px;top:401px">Sim</div><div class="t log" style="left:627px;top:416px">Cheque de ID Salteado</div><div class="t log" style="left:627px;top:431px">Verificando... Memoria de Código</div><div class="t log" style="left:627px;top:446px">Verificação Falhou, Direcão=0x000000, Dispositivo=0x02, Buffer=</div><div class="t log" style="left:627px;top:461px">0xFF</div><div class="t log" style="left:627px;top:476px">Verificação Falhou</div><div class="t log" style="left:627px;top:491px">Tempo Transcorrido: 1.37 Segundos.</div><div class="t log" style="left:627px;top:506px">Cheque de ID Falhou.("FF3F")</div><div class="t log" style="left:627px;top:521px">Verifique o tipo de dispositivo e a Direção do Chip em seu</div><div class="t log" style="left:627px;top:536px">local.</div><div class="t log" style="left:627px;top:551px">Alguns Chips OEM podem ser compativeis con Chip ID</div><div class="t log" style="left:627px;top:566px">Continuar?</div><div class="t log" style="left:627px;top:581px">Sim</div><div class="t log" style="left:627px;top:596px">Cheque de ID Salteado</div><div class="t log" style="left:627px;top:611px">Verificando... Memoria de Código</div><div class="t log" style="left:627px;top:626px">Verificação Falhou, Direcão=0x000000, Dispositivo=0x20, Buffer=</div><div class="t log" style="left:627px;top:641px">0xFF</div><div class="t log" style="left:627px;top:656px">Verificação Falhou</div><div class="t log" style="left:627px;top:671px">Tempo Transcorrido: 1.64 Segundos.</div><div class="t log" style="left:627px;top:686px">Cheque de ID Salteado</div><div class="t log" style="left:627px;top:701px">Verificando... Memoria de Código</div><div class="t log" style="left:627px;top:716px">Verificação Falhou, Direcão=0x000000, Dispositivo=0x20, Buffer=</div><div class="t log" style="left:627px;top:731px">0xFF</div><div class="t log" style="left:627px;top:746px">Verificação Falhou</div><div class="t log" style="left:627px;top:761px">Tempo Transcorrido: 2.88 Segundos.</div></div></div>
<div class="a" style="left:1139px;top:346px;width:17px;height:444px;background:#f0f0f0"></div>
<div class="a" style="left:1140px;top:684px;width:15px;height:89px;background:#cdcdcd"></div>
<svg class="a" style="left:1142px;top:352px;width:11px;height:9px" viewBox="0 0 11 9"><path d="M1.5 7L5.5 3l4 4" stroke="#606060" stroke-width="1.6" fill="none"/></svg>
<svg class="a" style="left:1142px;top:777px;width:11px;height:9px" viewBox="0 0 11 9"><path d="M1.5 2L5.5 6l4-4" stroke="#606060" stroke-width="1.6" fill="none"/></svg>
<div class="a" style="left:1156px;top:344px;width:2px;height:450px;background:#696969"></div>
<div class="a" style="left:623px;top:794px;width:535px;height:24px;background:#fff;border-top:2px solid #696969;border-left:2px solid #696969;border-right:1px solid #696969;border-bottom:1px solid #696969;box-shadow:inset -1px -1px 0 #e8e8e8"></div>
<div class="a" style="left:776px;top:333px;width:79px;height:19px;background:#ffffe1;border:1px solid #767676"></div>
<div class="t" style="left:779px;top:337px;font-size:12px;color:#000">Config device</div>
<div class="t" style="left:1242px;top:347px;font-family:'Liberation Serif',serif;font-weight:bold;font-size:16.5px;color:#0000d0;--tw:65.6;transform:scaleX(0.9416)">W27C010</div>
<div class="a" style="left:1379px;top:333px;width:11px;height:67px;border-top:1px solid #fff;border-left:1px solid #fff;border-right:2px solid #696969;border-bottom:2px solid #696969"></div>
<div class="t wt" style="left:1383px;top:360px">i</div>
<div class="a" style="left:1170px;top:409px;width:112px;height:33px;border:1px solid #a0a0a0;box-shadow:inset 1px 1px 0 #fff,1px 1px 0 #fff"></div><div class="t wt" style="left:1191px;top:404px;background:#f0f0f0;padding:0 2px">Arquivo Offset</div>
<div class="a" style="left:1283px;top:409px;width:113px;height:33px;border:1px solid #a0a0a0;box-shadow:inset 1px 1px 0 #fff,1px 1px 0 #fff"></div><div class="t wt" style="left:1297px;top:404px;background:#f0f0f0;padding:0 2px">Dispositivo Offset</div>
<div class="a" style="left:1176px;top:416px;width:102px;height:20px;background:#f0f0f0;border-top:2px solid #a0a0a0;border-left:2px solid #a0a0a0;border-right:1px solid #fff;border-bottom:1px solid #fff"></div>
<div class="t wt" style="left:1179px;top:420px">000000</div>
<div class="a" style="left:1290px;top:418px;width:101px;height:19px;background:#fff;border-top:2px solid #a0a0a0;border-left:2px solid #a0a0a0;border-right:1px solid #fff;border-bottom:1px solid #fff"></div>
<div class="t wt" style="left:1293px;top:422px">000000</div>
<div class="a" style="left:1170px;top:458px;width:226px;height:28px;border:1px solid #a0a0a0;box-shadow:inset 1px 1px 0 #fff,1px 1px 0 #fff"></div><div class="t wt" style="left:1255px;top:453px;background:#f0f0f0;padding:0 2px">Velocidade</div>
<svg class="a" style="left:1184px;top:468px;width:12px;height:12px" viewBox="0 0 12 12"><circle cx="6" cy="6" r="5.2" fill="#fff" stroke="#e3e3e3" stroke-width="0.8"/><path d="M10.2 2.2A5.4 5.4 0 0 0 1.8 10" stroke="#a8a8a8" stroke-width="1" fill="none"/><path d="M9.2 3.2A4.2 4.2 0 0 0 2.9 8.8" stroke="#707070" stroke-width="0.8" fill="none"/></svg>
<div class="t wt" style="left:1202px;top:469px">-2</div>
<svg class="a" style="left:1223px;top:468px;width:12px;height:12px" viewBox="0 0 12 12"><circle cx="6" cy="6" r="5.2" fill="#fff" stroke="#e3e3e3" stroke-width="0.8"/><path d="M10.2 2.2A5.4 5.4 0 0 0 1.8 10" stroke="#a8a8a8" stroke-width="1" fill="none"/><path d="M9.2 3.2A4.2 4.2 0 0 0 2.9 8.8" stroke="#707070" stroke-width="0.8" fill="none"/></svg>
<div class="t wt" style="left:1241px;top:469px">-1</div>
<svg class="a" style="left:1268px;top:468px;width:12px;height:12px" viewBox="0 0 12 12"><circle cx="6" cy="6" r="5.2" fill="#fff" stroke="#e3e3e3" stroke-width="0.8"/><path d="M10.2 2.2A5.4 5.4 0 0 0 1.8 10" stroke="#a8a8a8" stroke-width="1" fill="none"/><path d="M9.2 3.2A4.2 4.2 0 0 0 2.9 8.8" stroke="#707070" stroke-width="0.8" fill="none"/></svg>
<div class="t wt" style="left:1286px;top:469px">0</div>
<svg class="a" style="left:1308px;top:468px;width:12px;height:12px" viewBox="0 0 12 12"><circle cx="6" cy="6" r="5.2" fill="#fff" stroke="#e3e3e3" stroke-width="0.8"/><path d="M10.2 2.2A5.4 5.4 0 0 0 1.8 10" stroke="#a8a8a8" stroke-width="1" fill="none"/><path d="M9.2 3.2A4.2 4.2 0 0 0 2.9 8.8" stroke="#707070" stroke-width="0.8" fill="none"/></svg>
<div class="t wt" style="left:1327px;top:469px">+1</div>
<svg class="a" style="left:1355px;top:468px;width:12px;height:12px" viewBox="0 0 12 12"><circle cx="6" cy="6" r="5.2" fill="#fff" stroke="#e3e3e3" stroke-width="0.8"/><path d="M10.2 2.2A5.4 5.4 0 0 0 1.8 10" stroke="#a8a8a8" stroke-width="1" fill="none"/><path d="M9.2 3.2A4.2 4.2 0 0 0 2.9 8.8" stroke="#707070" stroke-width="0.8" fill="none"/><circle cx="6" cy="6" r="1.8" fill="#000"/></svg>
<div class="t wt" style="left:1373px;top:469px">+2</div>
<div class="a" style="left:1170px;top:508px;width:113px;height:179px;border:1px solid #a0a0a0;box-shadow:inset 1px 1px 0 #fff,1px 1px 0 #fff"></div><div class="t wt" style="left:1173px;top:503px;background:#f0f0f0;padding:0 2px">Direção do Dispositivo</div>
<div class="a" style="left:1287px;top:508px;width:109px;height:179px;border:1px solid #a0a0a0;box-shadow:inset 1px 1px 0 #fff,1px 1px 0 #fff"></div><div class="t wt" style="left:1321px;top:503px;background:#f0f0f0;padding:0 2px">Opcões</div>
<div class="a" style="left:1171px;top:666px;width:111px;height:1px;background:#a0a0a0;box-shadow:0 1px 0 #fff"></div>
<div class="a" style="left:1288px;top:666px;width:107px;height:1px;background:#a0a0a0;box-shadow:0 1px 0 #fff"></div>
<svg class="a" style="left:1173px;top:519px;width:108px;height:143px" viewBox="0 0 108 143"><rect width="108" height="143" fill="#d6d2c8"/><rect x="29.4" y="21.7" width="49.3" height="120" rx="2.5" fill="#111"/><rect x="35.3" y="9.9" width="43.4" height="30" rx="2.5" fill="#111"/><rect x="29.4" y="0" width="5.6" height="10" rx="2.8" fill="#111"/><rect x="31.5" y="5" width="2" height="17" fill="#111"/><circle cx="53" cy="14" r="2.2" stroke="#bbb" stroke-width="0.8" fill="none"/><circle cx="53" cy="14" r="0.8" fill="#bbb"/><circle cx="53.5" cy="137.5" r="2.2" stroke="#bbb" stroke-width="0.8" fill="none"/><circle cx="53.5" cy="137.5" r="0.8" fill="#bbb"/><rect x="34.5" y="24.60" width="14" height="2.2" fill="#f4f4a0"/><rect x="59.5" y="24.60" width="14.5" height="2.2" fill="#f4f4a0"/><rect x="34.5" y="30.00" width="14" height="2.2" fill="#f4f4a0"/><rect x="59.5" y="30.00" width="14.5" height="2.2" fill="#f4f4a0"/><rect x="34.5" y="35.70" width="14" height="2.2" fill="#f4f4a0"/><rect x="59.5" y="35.70" width="14.5" height="2.2" fill="#f4f4a0"/><rect x="34.5" y="41.25" width="14" height="2.2" fill="#f4f4a0"/><rect x="59.5" y="41.25" width="14.5" height="2.2" fill="#f4f4a0"/><rect x="38.4" y="44.9" width="32.6" height="88.6" fill="#717171"/><path d="M38.4 44.9V133.5M71 44.9V133.5" stroke="#ddd" stroke-width="0.8" stroke-dasharray="1.5 1.2"/><path d="M51 44.9a3 2 0 0 0 6 0" fill="#111"/><rect x="34.3" y="46.20" width="3.2" height="3" fill="#e02020"/><rect x="71.3" y="46.20" width="3.2" height="3" fill="#f4f4a0"/><rect x="34.3" y="51.75" width="3.2" height="3" fill="#f4f4a0"/><rect x="71.3" y="51.75" width="3.2" height="3" fill="#f4f4a0"/><rect x="34.3" y="57.30" width="3.2" height="3" fill="#f4f4a0"/><rect x="71.3" y="57.30" width="3.2" height="3" fill="#f4f4a0"/><rect x="34.3" y="62.85" width="3.2" height="3" fill="#f4f4a0"/><rect x="71.3" y="62.85" width="3.2" height="3" fill="#f4f4a0"/><rect x="34.3" y="68.40" width="3.2" height="3" fill="#f4f4a0"/><rect x="71.3" y="68.40" width="3.2" height="3" fill="#f4f4a0"/><rect x="34.3" y="73.95" width="3.2" height="3" fill="#f4f4a0"/><rect x="71.3" y="73.95" width="3.2" height="3" fill="#f4f4a0"/><rect x="34.3" y="79.50" width="3.2" height="3" fill="#f4f4a0"/><rect x="71.3" y="79.50" width="3.2" height="3" fill="#f4f4a0"/><rect x="34.3" y="85.05" width="3.2" height="3" fill="#f4f4a0"/><rect x="71.3" y="85.05" width="3.2" height="3" fill="#f4f4a0"/><rect x="34.3" y="90.60" width="3.2" height="3" fill="#f4f4a0"/><rect x="71.3" y="90.60" width="3.2" height="3" fill="#f4f4a0"/><rect x="34.3" y="96.15" width="3.2" height="3" fill="#f4f4a0"/><rect x="71.3" y="96.15" width="3.2" height="3" fill="#f4f4a0"/><rect x="34.3" y="101.70" width="3.2" height="3" fill="#f4f4a0"/><rect x="71.3" y="101.70" width="3.2" height="3" fill="#f4f4a0"/><rect x="34.3" y="107.25" width="3.2" height="3" fill="#f4f4a0"/><rect x="71.3" y="107.25" width="3.2" height="3" fill="#f4f4a0"/><rect x="34.3" y="112.80" width="3.2" height="3" fill="#f4f4a0"/><rect x="71.3" y="112.80" width="3.2" height="3" fill="#f4f4a0"/><rect x="34.3" y="118.35" width="3.2" height="3" fill="#f4f4a0"/><rect x="71.3" y="118.35" width="3.2" height="3" fill="#f4f4a0"/><rect x="34.3" y="123.90" width="3.2" height="3" fill="#f4f4a0"/><rect x="71.3" y="123.90" width="3.2" height="3" fill="#f4f4a0"/><rect x="34.3" y="129.45" width="3.2" height="3" fill="#f4f4a0"/><rect x="71.3" y="129.45" width="3.2" height="3" fill="#f4f4a0"/><text x="16.5" y="30.7" font-family="Liberation Sans" font-weight="bold" font-size="13" fill="#111">1</text><text x="81" y="30.7" font-family="Liberation Sans" font-weight="bold" font-size="13" fill="#111">40</text><text x="18" y="52" font-family="Liberation Sans" font-weight="bold" font-size="13" fill="#e01010">5</text><text x="12.5" y="136.3" font-family="Liberation Sans" font-weight="bold" font-size="13" fill="#111">20</text><text x="81" y="136.3" font-family="Liberation Sans" font-weight="bold" font-size="13" fill="#111">21</text></svg>
<div class="a" style="left:1173px;top:672px;width:12px;height:12px;background:#f0f0f0;border-top:1px solid #a0a0a0;border-left:1px solid #a0a0a0;border-right:1px solid #fff;border-bottom:1px solid #fff;box-shadow:inset 1px 1px 0 #d0d0d0"></div>
<div class="t wt" style="left:1192px;top:672px;color:#a0a0a0">Temp. Desprotegid</div>
<div class="a" style="left:1295px;top:518px;width:12px;height:12px;background:#fff;border-top:1px solid #a0a0a0;border-left:1px solid #a0a0a0;border-right:1px solid #fff;border-bottom:1px solid #fff;box-shadow:inset 1px 1px 0 #6a6a6a"></div>
<div class="t wt" style="left:1313px;top:520px">Check ID</div>
<div class="a" style="left:1295px;top:536px;width:12px;height:12px;background:#fff;border-top:1px solid #a0a0a0;border-left:1px solid #a0a0a0;border-right:1px solid #fff;border-bottom:1px solid #fff;box-shadow:inset 1px 1px 0 #6a6a6a"></div>
<div class="t wt" style="left:1313px;top:538px">Ler</div>
<div class="a" style="left:1295px;top:556px;width:12px;height:12px;background:#fff;border-top:1px solid #a0a0a0;border-left:1px solid #a0a0a0;border-right:1px solid #fff;border-bottom:1px solid #fff;box-shadow:inset 1px 1px 0 #6a6a6a"></div>
<div class="t wt" style="left:1313px;top:558px">Apagar</div>
<div class="a" style="left:1295px;top:576px;width:12px;height:12px;background:#fff;border-top:1px solid #a0a0a0;border-left:1px solid #a0a0a0;border-right:1px solid #fff;border-bottom:1px solid #fff;box-shadow:inset 1px 1px 0 #6a6a6a"></div>
<div class="t wt" style="left:1313px;top:578px">Verif. Brancc</div>
<div class="a" style="left:1295px;top:598px;width:12px;height:12px;background:#fff;border-top:1px solid #a0a0a0;border-left:1px solid #a0a0a0;border-right:1px solid #fff;border-bottom:1px solid #fff;box-shadow:inset 1px 1px 0 #6a6a6a"></div><svg class="a" style="left:1295px;top:598px;width:12px;height:12px" viewBox="0 0 12 12"><path d="M3 5.5l2 2.2L9.2 3.2" stroke="#000" stroke-width="1.9" fill="none"/></svg>
<div class="t wt" style="left:1313px;top:600px">Escrever</div>
<div class="a" style="left:1295px;top:618px;width:12px;height:12px;background:#fff;border-top:1px solid #a0a0a0;border-left:1px solid #a0a0a0;border-right:1px solid #fff;border-bottom:1px solid #fff;box-shadow:inset 1px 1px 0 #6a6a6a"></div><svg class="a" style="left:1295px;top:618px;width:12px;height:12px" viewBox="0 0 12 12"><path d="M3 5.5l2 2.2L9.2 3.2" stroke="#000" stroke-width="1.9" fill="none"/></svg>
<div class="t wt" style="left:1313px;top:620px">Verificar</div>
<div class="a" style="left:1295px;top:639px;width:12px;height:12px;background:#fff;border-top:1px solid #a0a0a0;border-left:1px solid #a0a0a0;border-right:1px solid #fff;border-bottom:1px solid #fff;box-shadow:inset 1px 1px 0 #6a6a6a"></div>
<div class="t wt" style="left:1313px;top:641px">Proteger</div>
<div class="a" style="left:1296px;top:672px;width:12px;height:12px;background:#fff;border-top:1px solid #a0a0a0;border-left:1px solid #a0a0a0;border-right:1px solid #fff;border-bottom:1px solid #fff;box-shadow:inset 1px 1px 0 #6a6a6a"></div>
<div class="t wt" style="left:1314px;top:672px">Doble Escritura</div>
<div class="a" style="left:1163px;top:698px;width:226px;height:103px;border:1px solid #a0a0a0;box-shadow:inset 1px 1px 0 #fff,1px 1px 0 #fff"></div><div class="t wt" style="left:1251px;top:693px;background:#f0f0f0;padding:0 2px">Adaptador</div>
<div class="t" style="left:1191px;top:725px;font-size:11.5px;font-weight:bold;color:#800000;line-height:13px;letter-spacing:0.2px">Não é necessário adaptador para<br>encapsulamento DIP.</div>
<div class="a" style="left:498px;top:820px;width:924px;height:1px;background:#a0a0a0"></div>
<div class="t" style="left:500px;top:824px;font-size:11.5px;color:#000">Set CFG bits for device</div>
<div class="a" style="left:986px;top:820px;width:141px;height:17px;border-left:1px solid #a0a0a0;box-shadow:inset 0 -1px 0 #fff"></div>
<div class="t" style="left:988.5px;top:824px;font-size:11.5px;color:#000;--tw:106.6;transform:scaleX(0.9639)">Checksum:01FE0000</div>
<div class="a" style="left:1130px;top:820px;width:128px;height:17px;border-left:1px solid #a0a0a0;box-shadow:inset 0 -1px 0 #fff"></div>
<div class="t" style="left:1132.5px;top:824px;font-size:11.5px;color:#000;--tw:96;transform:scaleX(1.0145)">Verificação Falhou</div>
<div class="a" style="left:1261px;top:820px;width:160px;height:17px;border-left:1px solid #a0a0a0;box-shadow:inset 0 -1px 0 #fff"></div>
<div class="t" style="left:1263.5px;top:824px;font-size:11.5px;color:#000;--tw:135.5;transform:scaleX(0.9495)">GQ-4x4 1.0 @ SW Re. 7.38</div>
<svg class="a" style="left:1408px;top:823px;width:13px;height:13px" viewBox="0 0 13 13"><path d="M12 2.5L2.5 12M12 6.5L6.5 12M12 10.5L10.5 12" stroke="#909090" stroke-width="1.3"/></svg>
<div class="a" style="left:0;top:1040px;width:1920px;height:40px;background:linear-gradient(90deg,#223840 0%,#213446 50%,#1e2d40 75%,#1c2a3e 100%)"></div>
<svg class="a" style="left:16px;top:1052px;width:16px;height:16px" viewBox="0 0 16 16"><path d="M0 2.2l6.5-.9v6.2H0zM7.3 1.2L16 0v7.5H7.3zM0 8.3h6.5v6.3L0 13.7zM7.3 8.3H16V16l-8.7-1.2z" fill="#fff"/></svg>
<div class="a" style="left:48px;top:1040px;width:288px;height:40px;background:#f0f0f0;border:1px solid #cfcfcf"></div>
<svg class="a" style="left:59px;top:1051px;width:18px;height:18px" viewBox="0 0 18 18"><circle cx="11" cy="7" r="5.2" stroke="#222" stroke-width="1.3" fill="none"/><path d="M7.2 10.8L1.5 16.5" stroke="#222" stroke-width="1.5"/></svg>
<div class="t" style="left:88px;top:1052px;font-size:15px;color:#222;--tw:61;transform:scaleX(0.9145)">Pesquisar</div>
<svg class="a" style="left:262px;top:1041px;width:72px;height:39px" viewBox="0 0 72 39"><path d="M3 9l6-4 20 13-4 5z" fill="#d8a040" stroke="#8a5a20" stroke-width="0.8"/><path d="M40 38L66 12l3 4-26 23z" fill="#8a5020"/><path d="M32 30l24-22 10 8-20 20z" fill="#a86828"/><path d="M42 12l12-6 4 10-14 4z" fill="#f0d080"/><circle cx="44" cy="28" r="4" fill="#90b020"/><circle cx="52" cy="25" r="3.5" fill="#a0c030"/><circle cx="32" cy="24" r="3" fill="#f8c8d8" stroke="#d04070" stroke-width="0.8"/><circle cx="30" cy="30" r="3" fill="#f8c8d8" stroke="#d04070" stroke-width="0.8"/><circle cx="31" cy="36" r="3" fill="#f8c8d8" stroke="#d04070" stroke-width="0.8"/><circle cx="22" cy="4" r="1" fill="#bbb"/><circle cx="28" cy="7" r="1" fill="#d0a040"/></svg>
<svg class="a" style="left:350px;top:1051px;width:18px;height:18px" viewBox="0 0 18 18"><rect x="1.5" y="3.5" width="11" height="10" stroke="#fff" stroke-width="1.3" fill="none"/><path d="M0 1.5h14M0 15.5h14M16 1v3M16 6v3M16 11v3" stroke="#fff" stroke-width="1.3"/></svg>
<svg class="a" style="left:400px;top:1050px;width:23px;height:20px" viewBox="0 0 23 20"><path d="M0 2h8l2 2h13v16H0z" fill="#e8b020"/><path d="M0 6h23v14H0z" fill="#f8d050"/><path d="M7 14h9v6H7z" fill="#2a7ad8"/><path d="M9 16h5v4H9z" fill="#f8d050"/></svg>
<div class="a" style="left:391px;top:1078px;width:39px;height:2px;background:#76b9ed"></div>
<svg class="a" style="left:448px;top:1048px;width:24px;height:24px" viewBox="0 0 24 24"><circle cx="12" cy="12" r="11.5" fill="#1a80d0"/><path d="M1 12A11 11 0 0 1 23 11c0 4-4 6-7 5s-2-5-5-4.5S6 16 10 20A11 11 0 0 1 1 12z" fill="#40c0a0"/><path d="M6 14c0-4 3-6 6-6s5 2 5 4c0 1-1 2-3 2H9c0 3 3 5 6 5 2 0 3-1 4-1-2 3-5 4-8 4-3 0-5-3-5-8z" fill="#0a50a0"/></svg>
<svg class="a" style="left:497px;top:1048px;width:22px;height:24px" viewBox="0 0 22 24"><path d="M7 6V3h8v3" stroke="#28a0e0" stroke-width="1.5" fill="none"/><rect x="1" y="6" width="20" height="17" rx="2" fill="#f4f4f4"/><rect x="7" y="11" width="3.5" height="3.5" fill="#f25022"/><rect x="11.5" y="11" width="3.5" height="3.5" fill="#7fba00"/><rect x="7" y="15.5" width="3.5" height="3.5" fill="#00a4ef"/><rect x="11.5" y="15.5" width="3.5" height="3.5" fill="#ffb900"/></svg>
<svg class="a" style="left:546px;top:1048px;width:24px;height:24px" viewBox="0 0 24 24"><path d="M8 4l8-3 8 5v14H8z" fill="#1a90e0"/><path d="M10 10l14-4v16H10z" fill="#28b0f0"/><rect x="1" y="7" width="12" height="12" rx="1" fill="#0a64c0"/><circle cx="7" cy="13" r="3" stroke="#fff" stroke-width="1.6" fill="none"/></svg>
<svg class="a" style="left:595px;top:1048px;width:24px;height:24px" viewBox="0 0 24 24"><circle cx="12" cy="12" r="11.5" fill="#db4437"/><path d="M12 12L2 6.2A11.5 11.5 0 0 0 12 23.5z" fill="#0f9d58"/><path d="M12 12L12 23.5A11.5 11.5 0 0 0 22 6.2z" fill="#f4b400"/><path d="M12 12L2 6.2A11.5 11.5 0 0 1 22 6.2z" fill="#db4437"/><circle cx="12" cy="12" r="5.3" fill="#fff"/><circle cx="12" cy="12" r="4.2" fill="#4285f4"/></svg>
<svg class="a" style="left:646px;top:1049px;width:20px;height:22px" viewBox="0 0 20 22"><rect x="1" y="1" width="8" height="20" rx="3" fill="none" stroke="#111" stroke-width="1.6"/><rect x="11" y="1" width="8" height="20" rx="3" fill="#111"/><circle cx="5" cy="6" r="1.3" fill="#111"/><circle cx="15" cy="12" r="1.3" fill="#333"/></svg>
<svg class="a" style="left:693px;top:1048px;width:24px;height:24px" viewBox="0 0 24 24"><circle cx="12" cy="12" r="11.5" fill="#50b8e0"/><circle cx="12" cy="12" r="9.5" fill="#fff" opacity="0.25"/><path d="M16 6c-3-1.5-8-1-8 2.5S16 12 16 15.5 10 19 7 17" stroke="#fff" stroke-width="2.2" fill="none"/></svg>
<div class="a" style="left:685px;top:1078px;width:39px;height:2px;background:#76b9ed"></div>
<svg class="a" style="left:741px;top:1048px;width:24px;height:24px" viewBox="0 0 24 24"><circle cx="12" cy="12" r="11.5" fill="#db4437"/><path d="M12 12L2 6.2A11.5 11.5 0 0 0 12 23.5z" fill="#0f9d58"/><path d="M12 12L12 23.5A11.5 11.5 0 0 0 22 6.2z" fill="#f4b400"/><path d="M12 12L2 6.2A11.5 11.5 0 0 1 22 6.2z" fill="#db4437"/><circle cx="12" cy="12" r="5.3" fill="#fff"/><circle cx="12" cy="12" r="4.2" fill="#4285f4"/></svg>
<div class="a" style="left:755px;top:1062px;width:12px;height:12px;border-radius:6px;background:radial-gradient(circle,#c09080 0,#888 60%,#ccc 100%)"></div>
<div class="a" style="left:734px;top:1078px;width:39px;height:2px;background:#76b9ed"></div>
<svg class="a" style="left:790px;top:1049px;width:24px;height:22px" viewBox="0 0 24 22"><rect x="0" y="6" width="24" height="16" fill="#9a9a8a"/><rect x="2" y="10" width="6" height="6" fill="#6a8a6a"/><rect x="10" y="12" width="8" height="8" fill="#c0c0b0"/><path d="M4 6L8 0l4 5 5-4 3 5" fill="#bbb"/></svg>
<div class="a" style="left:783px;top:1078px;width:39px;height:2px;background:#76b9ed"></div>
<svg class="a" style="left:840px;top:1047px;width:22px;height:25px" viewBox="0 0 22 25"><rect x="1" y="2" width="20" height="7" fill="#b02040"/><rect x="1" y="9" width="20" height="7" fill="#3a6ac0"/><rect x="1" y="16" width="20" height="7" fill="#40a040"/><rect x="8" y="0" width="6" height="25" fill="#e8c050"/><rect x="9" y="10" width="4" height="5" fill="#8a4010"/></svg>
<div class="a" style="left:832px;top:1078px;width:39px;height:2px;background:#76b9ed"></div>
<svg class="a" style="left:890px;top:1050px;width:22px;height:20px" viewBox="0 0 22 20"><path d="M1 11l6 7L21 1" stroke="#0a0a0a" stroke-width="2.2" fill="none"/></svg>
<div class="a" style="left:881px;top:1078px;width:39px;height:2px;background:#76b9ed"></div>
<div class="a" style="left:925px;top:1040px;width:49px;height:40px;background:#3d4d5a"></div>
<svg class="a" style="left:938px;top:1048px;width:24px;height:24px" viewBox="0 0 24 24"><rect width="24" height="24" fill="#f4f000"/><path d="M3 12l9-8 9 7-9 9z" fill="#999" stroke="#333" stroke-width="0.8"/><text x="6" y="15" font-family="Liberation Sans" font-weight="bold" font-size="9" fill="#e00000" stroke="#600" stroke-width="0.4">GQ</text></svg>
<div class="a" style="left:925px;top:1078px;width:49px;height:2px;background:#76b9ed"></div>
<svg class="a" style="left:1482px;top:1048px;width:20px;height:24px" viewBox="0 0 20 24"><rect x="3" y="1" width="5" height="16" rx="2.5" fill="#80b8f0"/><circle cx="5.5" cy="18.5" r="4.5" fill="#3a80e0"/><rect x="4.5" y="6" width="2" height="12" fill="#3a80e0"/><path d="M15 22V8M12 11l3-3 3 3M12 4h6" stroke="#f06030" stroke-width="1.8" fill="none"/></svg>
<div class="t" style="left:1512px;top:1053px;font-size:14.5px;color:#fff;--tw:121;transform:scaleX(0.9563)">Próxima do recorde</div>
<svg class="a" style="left:1658px;top:1055px;width:13px;height:9px" viewBox="0 0 13 9"><path d="M1 8l5.5-6L12 8" stroke="#fff" stroke-width="1.2" fill="none"/></svg>
<svg class="a" style="left:1681px;top:1052px;width:16px;height:16px" viewBox="0 0 16 16"><rect x="2" y="4" width="9" height="8" rx="1" stroke="#fff" stroke-width="1.1" fill="none"/><path d="M11 7l3-2v6l-3-2" stroke="#fff" stroke-width="1.1" fill="none"/><path d="M3 1.5h6M3 14.5h6" stroke="#fff" stroke-width="1"/></svg>
<svg class="a" style="left:1703px;top:1054px;width:19px;height:12px" viewBox="0 0 19 12"><path d="M4 11a3.5 3.5 0 010-7 5 5 0 019.5-1A3.8 3.8 0 0115 11z" fill="#eee"/></svg>
<svg class="a" style="left:1728px;top:1052px;width:18px;height:16px" viewBox="0 0 18 16"><rect x="5" y="5" width="12" height="8" stroke="#fff" stroke-width="1.1" fill="none"/><rect x="7" y="7" width="8" height="4" fill="#fff"/><path d="M1 4h4M2 1v3M4 1v3M3 4v4h3" stroke="#fff" stroke-width="1.1" fill="none"/></svg>
<svg class="a" style="left:1752px;top:1052px;width:18px;height:16px" viewBox="0 0 18 16"><rect x="5" y="1" width="12" height="9" stroke="#fff" stroke-width="1.1" fill="none"/><path d="M11 10v4M7 14.5h8M1 4h4v6H1z" stroke="#fff" stroke-width="1.1" fill="none"/></svg>
<svg class="a" style="left:1775px;top:1051px;width:18px;height:18px" viewBox="0 0 18 18"><path d="M2 6h3l4-4v14l-4-4H2z" stroke="#fff" stroke-width="1.1" fill="none"/><path d="M11 6a4 4 0 010 6M13 4a7 7 0 010 10M15 2a10 10 0 010 14" stroke="#fff" stroke-width="1.1" fill="none"/></svg>
<div class="t" style="left:1802px;top:1045px;width:58px;text-align:center;font-size:12px;color:#fff">00:38</div>
<div class="t" style="left:1797px;top:1062px;width:68px;text-align:center;font-size:12px;color:#fff">29/12/2024</div>
<svg class="a" style="left:1877px;top:1049px;width:30px;height:26px" viewBox="0 0 30 26"><path d="M1 2h16v11H6l-3 3v-3H1z" fill="#fff"/><path d="M4 5h10M4 8h10" stroke="#1a2940" stroke-width="1"/><circle cx="19" cy="16" r="8.5" fill="#1a2940" stroke="#888" stroke-width="1"/><text x="19" y="20" text-anchor="middle" font-family="Liberation Sans" font-size="11" fill="#fff">16</text></svg>
<div class="a" style="left:1914px;top:1040px;width:1px;height:40px;background:#555"></div>
</body></html>
